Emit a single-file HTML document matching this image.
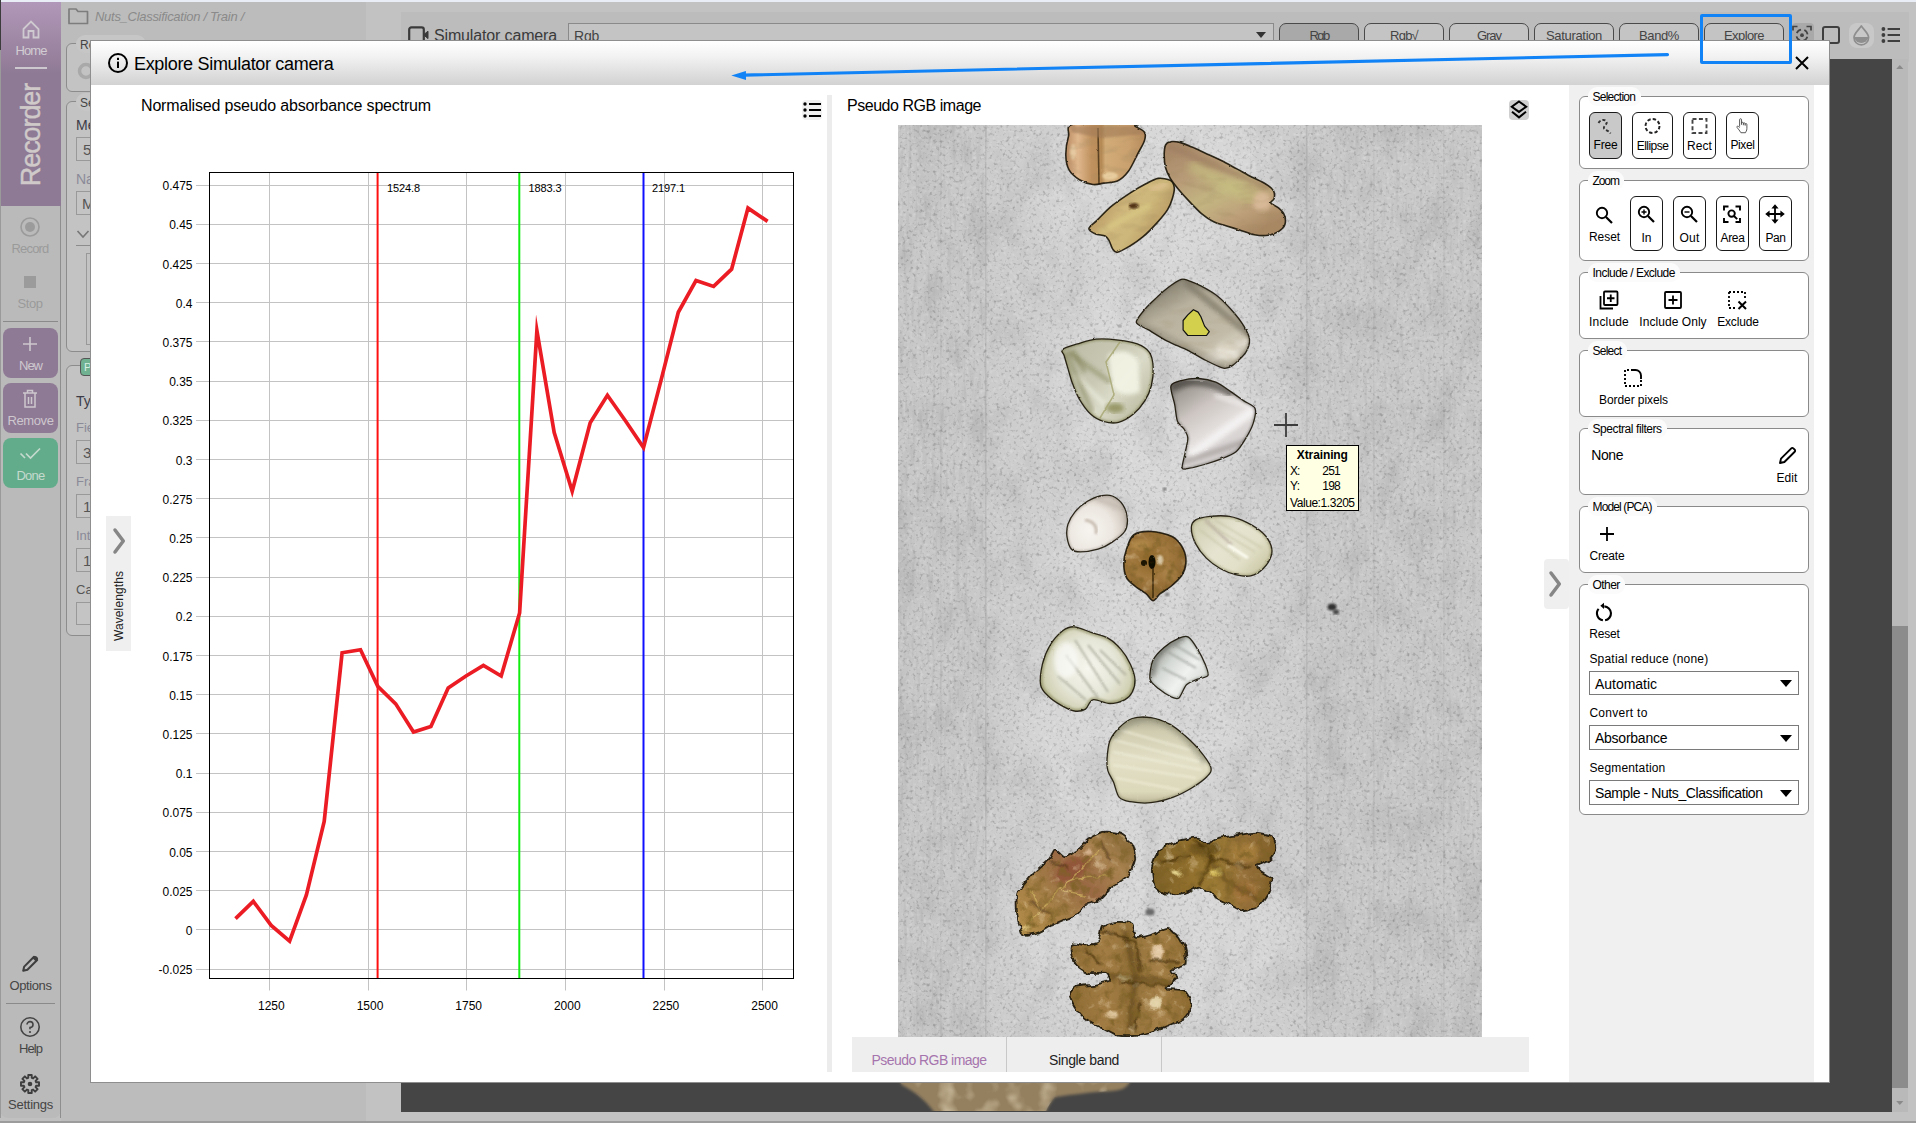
<!DOCTYPE html>
<html><head><meta charset="utf-8"><title>Explore Simulator camera</title>
<style>
html,body{margin:0;padding:0;}
body{width:1916px;height:1123px;overflow:hidden;position:relative;background:#c0c0c0;font-family:"Liberation Sans",sans-serif;}
.a{position:absolute;display:block;}
.t{white-space:nowrap;}
</style></head><body>
<div class="a" style="left:0px;top:0px;width:1916px;height:2px;background:#e9edf6;"></div>
<div class="a" style="left:61px;top:2px;width:305px;height:1120px;background:#bcbcbc;"></div>
<div class="a" style="left:366px;top:2px;width:1550px;height:1120px;background:#c2c2c2;"></div>
<div class="a" style="left:401px;top:12px;width:1508px;height:50px;background:#bcbcbc;"></div>
<div class="a" style="left:0px;top:2px;width:61px;height:1116px;background:#bababa;border-bottom-left-radius:8px;border-bottom-right-radius:8px;"></div>
<div class="a" style="left:1px;top:2px;width:60px;height:204px;background:#8f7a95;"></div>
<div class="a" style="left:1px;top:2px;width:60px;height:72px;background:linear-gradient(#b197b9,#8f7a95);"></div>
<div class="a" style="left:0px;top:0px;width:1px;height:50px;background:#3c3c3c;"></div>
<div class="a" style="left:0px;top:50px;width:1px;height:1068px;background:#9a9a9a;"></div>
<div class="a" style="left:60px;top:206px;width:1px;height:912px;background:#8e8e8e;"></div>
<div class="a" style="left:0px;top:1121px;width:1916px;height:2px;background:#9c9c9c;"></div>
<svg class="a" style="left:20px;top:19px;" width="22" height="20"><path d="M3.5 10 L11 2.5 L18.5 10 V18.5 H13.5 V12 H8.5 V18.5 H3.5 Z" fill="none" stroke="#cfcacf" stroke-width="1.8" stroke-linejoin="miter"/></svg>
<div class="a t" style="left:15.50px;top:42.00px;font-size:13px;line-height:17px;color:#d2cdd2;letter-spacing:-0.919px;">Home</div>
<div class="a" style="left:15px;top:67px;width:32px;height:2px;background:#cdc8cd;"></div>
<div class="a t" style="left:31px;top:134.5px;width:0;height:0;"><div class="a t" style="transform:translate(-50%,-50%) rotate(-90deg);font-size:27px;font-weight:normal;-webkit-text-stroke:0.45px #cfcac9;color:#cfcac9;letter-spacing:-1.1px;line-height:30px;">Recorder</div></div>
<svg class="a" style="left:19px;top:216px;" width="22" height="22"><circle cx="11" cy="11" r="9" fill="none" stroke="#9b9b9b" stroke-width="1.6"/><circle cx="11" cy="11" r="5" fill="#9b9b9b"/></svg>
<div class="a t" style="left:11.50px;top:239.50px;font-size:13px;line-height:17px;color:#9a9a9a;letter-spacing:-0.818px;">Record</div>
<div class="a" style="left:24px;top:276px;width:12px;height:12px;background:#9b9b9b;"></div>
<div class="a t" style="left:17.50px;top:295.00px;font-size:13px;line-height:17px;color:#9a9a9a;letter-spacing:-0.436px;">Stop</div>
<div class="a" style="left:3px;top:321px;width:55px;height:1.4px;background:#8a8a8a;"></div>
<div class="a" style="left:3px;top:328px;width:55px;height:50px;background:#8f7a95;border-radius:8px;"></div>
<svg class="a" style="left:20px;top:334px;" width="20" height="20"><path d="M10 3 V17 M3 10 H17" stroke="#cdc7ce" stroke-width="1.6" fill="none"/></svg>
<div class="a t" style="left:19.00px;top:356.50px;font-size:13px;line-height:17px;color:#cdc7ce;letter-spacing:-1.002px;">New</div>
<div class="a" style="left:3px;top:383px;width:55px;height:50px;background:#8f7a95;border-radius:8px;"></div>
<svg class="a" style="left:20px;top:388px;" width="20" height="22"><path d="M3 5 H17 M7.5 5 V2.5 H12.5 V5 M5 5 V19 H15 V5 M8.5 9 V16 M11.5 9 V16" stroke="#cdc7ce" stroke-width="1.5" fill="none"/></svg>
<div class="a t" style="left:7.50px;top:412.00px;font-size:13px;line-height:17px;color:#cdc7ce;letter-spacing:-0.401px;">Remove</div>
<div class="a" style="left:3px;top:438px;width:55px;height:50px;background:#63ac8b;border-radius:8px;"></div>
<svg class="a" style="left:18px;top:446px;" width="26" height="16"><path d="M2.5 7.5 L7 12 M8 7.5 L12.5 12 L22 2.5" stroke="#c4dace" stroke-width="1.7" fill="none"/></svg>
<div class="a t" style="left:16.50px;top:467.00px;font-size:13px;line-height:17px;color:#c4dace;letter-spacing:-0.769px;">Done</div>
<svg class="a" style="left:19px;top:953px;" width="22" height="22"><path d="M4.2 17.8 L5.2 13.6 L15 3.8 L18.2 7 L8.4 16.8 Z" stroke="#3e3e3e" stroke-width="2" fill="none" stroke-linejoin="round"/><path d="M13.6 5.2 L15.4 3.4 a1.6 1.6 0 0 1 2.2 0 L18.6 4.4 a1.6 1.6 0 0 1 0 2.2 L16.8 8.4 Z" fill="#3e3e3e"/></svg>
<div class="a t" style="left:9.50px;top:976.70px;font-size:13px;line-height:17px;color:#454545;letter-spacing:-0.400px;">Options</div>
<div class="a" style="left:6px;top:1003px;width:49px;height:1px;background:#8a8a8a;"></div>
<svg class="a" style="left:19px;top:1016px;" width="22" height="22"><circle cx="11" cy="11" r="9.2" fill="none" stroke="#444" stroke-width="1.6"/><path d="M8 8.6 A3 3 0 1 1 11 11.6 V13.2" fill="none" stroke="#444" stroke-width="1.6"/><circle cx="11" cy="16" r="1.1" fill="#444"/></svg>
<div class="a t" style="left:19.00px;top:1039.80px;font-size:13px;line-height:17px;color:#454545;letter-spacing:-0.934px;">Help</div>
<svg class="a" style="left:19px;top:1073px;" width="22" height="22"><g transform="translate(11,11)" stroke="#3e3e3e" fill="none" stroke-width="1.9"><circle r="2.3" fill="#3e3e3e" stroke="none"/><polygon points="9.03,-1.74 9.03,1.74 6.17,1.71 5.57,3.15 7.62,5.16 5.16,7.62 3.15,5.57 1.71,6.17 1.74,9.03 -1.74,9.03 -1.71,6.17 -3.15,5.57 -5.16,7.62 -7.62,5.16 -5.57,3.15 -6.17,1.71 -9.03,1.74 -9.03,-1.74 -6.17,-1.71 -5.57,-3.15 -7.62,-5.16 -5.16,-7.62 -3.15,-5.57 -1.71,-6.17 -1.74,-9.03 1.74,-9.03 1.71,-6.17 3.15,-5.57 5.16,-7.62 7.62,-5.16 5.57,-3.15 6.17,-1.71" stroke-linejoin="round"/></g></svg>
<div class="a t" style="left:8.00px;top:1096.00px;font-size:13px;line-height:17px;color:#454545;letter-spacing:-0.246px;">Settings</div>
<svg class="a" style="left:67px;top:6px;" width="24" height="20"><path d="M2 3 H9 L11 5.5 H20.5 V17.5 H2 Z" fill="none" stroke="#7d7d7d" stroke-width="1.7" stroke-linejoin="round"/></svg>
<div class="a t" style="left:95.00px;top:8.00px;font-size:13px;line-height:17px;color:#8a8a8a;letter-spacing:-0.285px;font-style:italic;">Nuts_Classification / Train /</div>
<div class="a" style="left:66px;top:43px;width:300px;height:49px;background:#c3c3c3;border:1px solid #8c8c8c;box-sizing:border-box;border-radius:6px;"></div>
<div class="a" style="left:76px;top:35px;width:70px;height:18px;background:#c6c6c6;border-radius:9px;"></div>
<div class="a t" style="left:80.00px;top:37.00px;font-size:12px;line-height:16px;color:#444;">Recorder</div>
<svg class="a" style="left:76px;top:61px;" width="20" height="20"><circle cx="10" cy="10" r="6.5" fill="none" stroke="#a9a9a9" stroke-width="3.5"/></svg>
<div class="a" style="left:66px;top:101px;width:300px;height:251px;background:#c3c3c3;border:1px solid #8c8c8c;box-sizing:border-box;border-radius:6px;"></div>
<div class="a" style="left:76px;top:93px;width:70px;height:18px;background:#c6c6c6;border-radius:9px;"></div>
<div class="a t" style="left:80.00px;top:94.50px;font-size:12px;line-height:16px;color:#444;">Settings</div>
<div class="a t" style="left:76.00px;top:115.50px;font-size:14px;line-height:18px;color:#3c3c48;">Measurement</div>
<div class="a" style="left:76px;top:137px;width:200px;height:24px;background:#c4c4c4;border:1px solid #999;box-sizing:border-box;"></div>
<div class="a t" style="left:83.00px;top:140.00px;font-size:15px;line-height:19px;color:#555;">5</div>
<div class="a t" style="left:76.00px;top:169.50px;font-size:14px;line-height:18px;color:#8a8a98;">Name</div>
<div class="a" style="left:76px;top:191px;width:200px;height:24px;background:#c4c4c4;border:1px solid #999;box-sizing:border-box;"></div>
<div class="a t" style="left:82.00px;top:194.00px;font-size:15px;line-height:19px;color:#555;">M</div>
<svg class="a" style="left:76px;top:228px;" width="14" height="12"><path d="M1.5 3 L7 9 L12.5 3" fill="none" stroke="#777" stroke-width="1.6"/></svg>
<div class="a" style="left:76px;top:245px;width:200px;height:1px;background:#8c8c8c;"></div>
<div class="a" style="left:86px;top:253px;width:200px;height:92px;border:1px solid #999;box-sizing:border-box;"></div>
<div class="a" style="left:66px;top:365px;width:300px;height:271px;background:#c3c3c3;border:1px solid #8c8c8c;box-sizing:border-box;border-radius:6px;"></div>
<div class="a" style="left:80px;top:358px;width:40px;height:18px;background:#6fb190;border:1px solid #555;box-sizing:border-box;border-radius:4px;"></div>
<div class="a t" style="left:84.00px;top:360.00px;font-size:11px;line-height:15px;color:#d8efe4;">P</div>
<div class="a t" style="left:76.00px;top:391.50px;font-size:14px;line-height:18px;color:#3c3c48;">Type</div>
<div class="a t" style="left:76.00px;top:418.50px;font-size:13px;line-height:17px;color:#8a8a98;">Field</div>
<div class="a" style="left:76px;top:440px;width:200px;height:24px;background:#c4c4c4;border:1px solid #999;box-sizing:border-box;"></div>
<div class="a t" style="left:83.00px;top:443.00px;font-size:15px;line-height:19px;color:#555;">3</div>
<div class="a t" style="left:76.00px;top:472.50px;font-size:13px;line-height:17px;color:#8a8a98;">Frames</div>
<div class="a" style="left:76px;top:494px;width:200px;height:24px;background:#c4c4c4;border:1px solid #999;box-sizing:border-box;"></div>
<div class="a t" style="left:83.00px;top:497.00px;font-size:15px;line-height:19px;color:#555;">1</div>
<div class="a t" style="left:76.00px;top:526.50px;font-size:13px;line-height:17px;color:#8a8a98;">Integration</div>
<div class="a" style="left:76px;top:548px;width:200px;height:24px;background:#c4c4c4;border:1px solid #999;box-sizing:border-box;"></div>
<div class="a t" style="left:83.00px;top:551.00px;font-size:15px;line-height:19px;color:#555;">1</div>
<div class="a t" style="left:76.00px;top:581.00px;font-size:13px;line-height:17px;color:#555;">Calibration</div>
<div class="a" style="left:76px;top:602px;width:200px;height:23px;background:#c4c4c4;border:1px solid #999;box-sizing:border-box;"></div>
<svg class="a" style="left:407px;top:25px;" width="24" height="18"><rect x="2.2" y="2.4" width="14.6" height="15" rx="2.2" fill="none" stroke="#3a3a3a" stroke-width="2.2"/><path d="M16.5 9.8 L21 6.2 V13.6 Z" fill="#3a3a3a" stroke="#3a3a3a" stroke-width="1"/></svg>
<div class="a t" style="left:434.00px;top:26.00px;font-size:16px;line-height:20px;color:#3a3a3a;letter-spacing:-0.148px;">Simulator camera</div>
<div class="a" style="left:568px;top:23px;width:706px;height:26px;background:#c4c4c4;border:1px solid #8a8a8a;box-sizing:border-box;"></div>
<div class="a t" style="left:574.00px;top:26.60px;font-size:14px;line-height:18px;color:#444;letter-spacing:-0.228px;">Rgb</div>
<svg class="a" style="left:1255px;top:31px;" width="12" height="8"><path d="M1 1 H11 L6 7 Z" fill="#333"/></svg>
<div class="a" style="left:1279px;top:23px;width:80px;height:30px;background:#a9a9a9;border:1px solid #4a4a4a;box-sizing:border-box;border-radius:7px;"></div>
<div class="a t" style="left:1309.50px;top:26.50px;font-size:13px;line-height:17px;color:#444;letter-spacing:-1.616px;">Rgb</div>
<div class="a" style="left:1364px;top:23px;width:80px;height:30px;background:#c4c4c4;border:1px solid #4a4a4a;box-sizing:border-box;border-radius:7px;"></div>
<div class="a t" style="left:1390.00px;top:26.50px;font-size:13px;line-height:17px;color:#444;letter-spacing:-0.745px;">Rgb√</div>
<div class="a" style="left:1449px;top:23px;width:80px;height:30px;background:#c4c4c4;border:1px solid #4a4a4a;box-sizing:border-box;border-radius:7px;"></div>
<div class="a t" style="left:1477.00px;top:26.50px;font-size:13px;line-height:17px;color:#444;letter-spacing:-1.043px;">Gray</div>
<div class="a" style="left:1534px;top:23px;width:80px;height:30px;background:#c4c4c4;border:1px solid #4a4a4a;box-sizing:border-box;border-radius:7px;"></div>
<div class="a t" style="left:1546.00px;top:26.50px;font-size:13px;line-height:17px;color:#444;letter-spacing:-0.326px;">Saturation</div>
<div class="a" style="left:1619px;top:23px;width:80px;height:30px;background:#c4c4c4;border:1px solid #4a4a4a;box-sizing:border-box;border-radius:7px;"></div>
<div class="a t" style="left:1639.00px;top:26.50px;font-size:13px;line-height:17px;color:#444;letter-spacing:-0.384px;">Band%</div>
<div class="a" style="left:1704px;top:23px;width:80px;height:30px;background:#c4c4c4;border:1px solid #4a4a4a;box-sizing:border-box;border-radius:7px;"></div>
<div class="a t" style="left:1724.00px;top:26.50px;font-size:13px;line-height:17px;color:#444;letter-spacing:-0.582px;">Explore</div>
<div class="a" style="left:1792px;top:23px;width:22px;height:26px;background:#a9a9a9;border-radius:4px;"></div>
<svg class="a" style="left:1791px;top:23px;" width="22" height="26"><g fill="none" stroke="#444" stroke-width="1.7"><path d="M2 7.5 V3.5 H6.5 M15.5 3.5 H20 V7.5 M2 17 V21 H6.5 M15.5 21 H20 V17"/><circle cx="11" cy="12.2" r="5.6" stroke-dasharray="5.4 3.4" stroke-dashoffset="-1.7"/></g><circle cx="11" cy="12.2" r="1.9" fill="#444"/></svg>
<div class="a" style="left:1822px;top:26px;width:18px;height:18px;border:2px solid #3f3f3f;box-sizing:border-box;border-radius:3px;"></div>
<div class="a" style="left:1849px;top:23px;width:25px;height:25px;background:#c8c8c8;border-radius:8px;"></div>
<svg class="a" style="left:1850px;top:23px;" width="24" height="24"><path d="M11.3 3 C 14 7, 18.6 10.5, 18.6 14.6 A7.3 7.3 0 0 1 4 14.6 C 4 10.5, 8.6 7, 11.3 3 Z" fill="none" stroke="#8e8e8e" stroke-width="1.7" stroke-linejoin="round"/><path d="M4.1 14 H18.5 A7.3 7.3 0 0 1 4.1 14 Z" fill="#8e8e8e"/></svg>
<svg class="a" style="left:1880px;top:26px;" width="22" height="18"><g fill="#3f3f3f"><circle cx="3.4" cy="3" r="1.9"/><circle cx="3.4" cy="9" r="1.9"/><circle cx="3.4" cy="15" r="1.9"/></g><path d="M7.6 3 H20 M7.6 9 H20 M7.6 15 H20" stroke="#3f3f3f" stroke-width="2"/></svg>
<div class="a" style="left:401px;top:59px;width:1491px;height:1053px;background:#454545;"></div>
<div class="a" style="left:1892px;top:59px;width:16px;height:1053px;background:#b9b9b9;"></div>
<div class="a" style="left:1892px;top:626px;width:16px;height:462px;background:#8c8c8c;"></div>
<svg class="a" style="left:1894px;top:63px;" width="12" height="8"><path d="M2.2 6 L5.8 2 L9.4 6 Z" fill="#8a8a8a"/></svg>
<svg class="a" style="left:1894px;top:1099px;" width="12" height="8"><path d="M2.2 2 L5.8 6 L9.4 2 Z" fill="#8a8a8a"/></svg>
<svg class="a" style="left:890px;top:1083px;" width="260" height="28"><defs><filter id="bl" x="-20%" y="-50%" width="140%" height="200%"><feGaussianBlur stdDeviation="1.8"/></filter><filter id="blt" x="0" y="0" width="100%" height="100%"><feTurbulence type="fractalNoise" baseFrequency="0.06" numOctaves="2" seed="4"/><feColorMatrix type="matrix" values="0 0 0 0 0.74  0 0 0 0 0.64  0 0 0 0 0.46  2.8 0 0 0 -1.3"/></filter><clipPath id="blc"><path d="M9 -4 H241 C 238 5, 232 7, 222 8 C 200 9, 180 12, 165 14 C 160 20, 156 26, 155 32 H46 C 40 22, 28 10, 12 2 Z"/></clipPath></defs><path d="M9 -4 H241 C 238 5, 232 7, 222 8 C 200 9, 180 12, 165 14 C 160 20, 156 26, 155 32 H46 C 40 22, 28 10, 12 2 Z" fill="#94805f" filter="url(#bl)"/><g clip-path="url(#blc)"><rect x="0" y="0" width="260" height="28" filter="url(#blt)" opacity="0.6"/></g></svg>
<div class="a" style="left:90px;top:40px;width:1740px;height:1043px;background:#ffffff;border:1px solid #8e8e8e;box-sizing:border-box;"></div>
<div class="a" style="left:91px;top:41px;width:1738px;height:44px;background:linear-gradient(#ffffff 0%,#f2f2f2 35%,#d2d2d2 100%);"></div>
<svg class="a" style="left:106px;top:51px;" width="24" height="24"><circle cx="12" cy="12" r="9" fill="none" stroke="#000" stroke-width="2"/><rect x="11" y="10.6" width="2" height="6.4" fill="#000"/><rect x="11" y="6.8" width="2" height="2.2" fill="#000"/></svg>
<div class="a t" style="left:134.00px;top:52.50px;font-size:18px;line-height:22px;color:#000;letter-spacing:-0.316px;">Explore Simulator camera</div>
<svg class="a" style="left:1794px;top:55px;" width="16" height="16"><path d="M2 2 L14 14 M14 2 L2 14" stroke="#000" stroke-width="2" fill="none"/></svg>
<div class="a t" style="left:141.00px;top:95.70px;font-size:16px;line-height:20px;color:#000;letter-spacing:-0.166px;">Normalised pseudo absorbance spectrum</div>
<div class="a" style="left:802px;top:100px;width:20px;height:20px;background:#f0f0f0;border-radius:4px;"></div>
<svg class="a" style="left:802px;top:101px;" width="20" height="18"><g fill="#000"><circle cx="3" cy="3" r="1.7"/><circle cx="3" cy="9" r="1.7"/><circle cx="3" cy="15" r="1.7"/></g><path d="M7 3 H19 M7 9 H19 M7 15 H19" stroke="#000" stroke-width="2"/></svg>
<div class="a" style="left:106px;top:516px;width:25px;height:135px;background:#efefef;"></div>
<svg class="a" style="left:111px;top:527px;" width="16" height="28"><path d="M4 3 L12.3 14 L4 25" fill="none" stroke="#868686" stroke-width="3.5" stroke-linecap="round" stroke-linejoin="round"/></svg>
<div class="a t" style="left:119px;top:605.5px;width:0;height:0;"><div class="a t" style="transform:translate(-50%,-50%) rotate(-90deg);font-size:12px;color:#222;letter-spacing:0.1px;line-height:14px;">Wavelengths</div></div>
<svg class="a" style="left:0px;top:0px;left:0;top:0;" width="840" height="1000"><rect x="209.5" y="172.5" width="584.0" height="806.0" fill="#fff" stroke="none"/><path d="M196 969.5 H793.5" stroke="#c3c3c3" stroke-width="1"/><path d="M196 929.5 H793.5" stroke="#c3c3c3" stroke-width="1"/><path d="M196 890.5 H793.5" stroke="#c3c3c3" stroke-width="1"/><path d="M196 851.5 H793.5" stroke="#c3c3c3" stroke-width="1"/><path d="M196 812.5 H793.5" stroke="#c3c3c3" stroke-width="1"/><path d="M196 773.5 H793.5" stroke="#c3c3c3" stroke-width="1"/><path d="M196 733.5 H793.5" stroke="#c3c3c3" stroke-width="1"/><path d="M196 694.5 H793.5" stroke="#c3c3c3" stroke-width="1"/><path d="M196 655.5 H793.5" stroke="#c3c3c3" stroke-width="1"/><path d="M196 616.5 H793.5" stroke="#c3c3c3" stroke-width="1"/><path d="M196 577.5 H793.5" stroke="#c3c3c3" stroke-width="1"/><path d="M196 537.5 H793.5" stroke="#c3c3c3" stroke-width="1"/><path d="M196 498.5 H793.5" stroke="#c3c3c3" stroke-width="1"/><path d="M196 459.5 H793.5" stroke="#c3c3c3" stroke-width="1"/><path d="M196 420.5 H793.5" stroke="#c3c3c3" stroke-width="1"/><path d="M196 381.5 H793.5" stroke="#c3c3c3" stroke-width="1"/><path d="M196 341.5 H793.5" stroke="#c3c3c3" stroke-width="1"/><path d="M196 302.5 H793.5" stroke="#c3c3c3" stroke-width="1"/><path d="M196 263.5 H793.5" stroke="#c3c3c3" stroke-width="1"/><path d="M196 224.5 H793.5" stroke="#c3c3c3" stroke-width="1"/><path d="M196 185.5 H793.5" stroke="#c3c3c3" stroke-width="1"/><path d="M269.5 172.5 V990.5" stroke="#c3c3c3" stroke-width="1"/><path d="M368.5 172.5 V990.5" stroke="#c3c3c3" stroke-width="1"/><path d="M466.5 172.5 V990.5" stroke="#c3c3c3" stroke-width="1"/><path d="M565.5 172.5 V990.5" stroke="#c3c3c3" stroke-width="1"/><path d="M664.5 172.5 V990.5" stroke="#c3c3c3" stroke-width="1"/><path d="M762.5 172.5 V990.5" stroke="#c3c3c3" stroke-width="1"/><path d="M377.6 172.5 V978.5" stroke="#ff1010" stroke-width="2"/><path d="M519.3 172.5 V978.5" stroke="#10ee10" stroke-width="2"/><path d="M643.5 172.5 V978.5" stroke="#1010ff" stroke-width="2"/><polyline fill="none" stroke="#ec1c24" stroke-width="3.7" stroke-linejoin="miter" stroke-miterlimit="12" points="235.5,918.6 253.3,901.3 271.2,925.4 289.6,941.2 306.4,895 324.2,821.4 342.1,652.8 360.5,649.7 377.8,686.4 395.7,703.8 413.5,732.1 430.9,726.4 448.2,688 466,676 483.4,665.4 501.2,676 519.6,612.9 536.9,330.6 554.2,432.5 572.2,491.3 590.2,422.7 607.4,395.3 625.4,420.8 643.5,447.5 660.7,381.6 678.3,312.3 696,280.5 713.6,286.4 731.6,269.2 748,208.1 767.6,221.4"/><rect x="209.5" y="172.5" width="584.0" height="806.0" fill="none" stroke="#000" stroke-width="1"/></svg>
<div class="a t" style="left:158.47px;top:962.20px;font-size:12px;line-height:16px;color:#000;">-0.025</div>
<div class="a t" style="left:185.83px;top:923.00px;font-size:12px;line-height:16px;color:#000;">0</div>
<div class="a t" style="left:162.47px;top:883.80px;font-size:12px;line-height:16px;color:#000;">0.025</div>
<div class="a t" style="left:169.15px;top:844.60px;font-size:12px;line-height:16px;color:#000;">0.05</div>
<div class="a t" style="left:162.47px;top:805.40px;font-size:12px;line-height:16px;color:#000;">0.075</div>
<div class="a t" style="left:175.82px;top:766.20px;font-size:12px;line-height:16px;color:#000;">0.1</div>
<div class="a t" style="left:162.47px;top:727.00px;font-size:12px;line-height:16px;color:#000;">0.125</div>
<div class="a t" style="left:169.15px;top:687.80px;font-size:12px;line-height:16px;color:#000;">0.15</div>
<div class="a t" style="left:162.47px;top:648.60px;font-size:12px;line-height:16px;color:#000;">0.175</div>
<div class="a t" style="left:175.82px;top:609.40px;font-size:12px;line-height:16px;color:#000;">0.2</div>
<div class="a t" style="left:162.47px;top:570.20px;font-size:12px;line-height:16px;color:#000;">0.225</div>
<div class="a t" style="left:169.15px;top:531.00px;font-size:12px;line-height:16px;color:#000;">0.25</div>
<div class="a t" style="left:162.47px;top:491.80px;font-size:12px;line-height:16px;color:#000;">0.275</div>
<div class="a t" style="left:175.82px;top:452.60px;font-size:12px;line-height:16px;color:#000;">0.3</div>
<div class="a t" style="left:162.47px;top:413.40px;font-size:12px;line-height:16px;color:#000;">0.325</div>
<div class="a t" style="left:169.15px;top:374.20px;font-size:12px;line-height:16px;color:#000;">0.35</div>
<div class="a t" style="left:162.47px;top:335.00px;font-size:12px;line-height:16px;color:#000;">0.375</div>
<div class="a t" style="left:175.82px;top:295.80px;font-size:12px;line-height:16px;color:#000;">0.4</div>
<div class="a t" style="left:162.47px;top:256.60px;font-size:12px;line-height:16px;color:#000;">0.425</div>
<div class="a t" style="left:169.15px;top:217.40px;font-size:12px;line-height:16px;color:#000;">0.45</div>
<div class="a t" style="left:162.47px;top:178.20px;font-size:12px;line-height:16px;color:#000;">0.475</div>
<div class="a t" style="left:258.01px;top:998.00px;font-size:12px;line-height:16px;color:#000;">1250</div>
<div class="a t" style="left:356.65px;top:998.00px;font-size:12px;line-height:16px;color:#000;">1500</div>
<div class="a t" style="left:455.29px;top:998.00px;font-size:12px;line-height:16px;color:#000;">1750</div>
<div class="a t" style="left:553.93px;top:998.00px;font-size:12px;line-height:16px;color:#000;">2000</div>
<div class="a t" style="left:652.57px;top:998.00px;font-size:12px;line-height:16px;color:#000;">2250</div>
<div class="a t" style="left:751.21px;top:998.00px;font-size:12px;line-height:16px;color:#000;">2500</div>
<div class="a t" style="left:387.00px;top:181.00px;font-size:11px;line-height:15px;color:#000;letter-spacing:-0.107px;">1524.8</div>
<div class="a t" style="left:528.50px;top:181.00px;font-size:11px;line-height:15px;color:#000;letter-spacing:-0.107px;">1883.3</div>
<div class="a t" style="left:652.00px;top:181.00px;font-size:11px;line-height:15px;color:#000;letter-spacing:-0.107px;">2197.1</div>
<div class="a" style="left:827px;top:95px;width:5px;height:977px;background:#ececec;"></div>
<div class="a t" style="left:847.00px;top:95.70px;font-size:16px;line-height:20px;color:#000;letter-spacing:-0.463px;">Pseudo RGB image</div>
<div class="a" style="left:1509px;top:100px;width:20px;height:20px;background:#d0d0d0;border-radius:4px;"></div>
<svg class="a" style="left:1509px;top:99px;" width="20" height="22"><path d="M10 2.5 L17.2 7.7 L10 12.9 L2.8 7.7 Z" fill="none" stroke="#000" stroke-width="2" stroke-linejoin="miter"/><path d="M3 12.7 L10 18.4 L17 12.7" fill="none" stroke="#000" stroke-width="2"/></svg>
<div class="a" style="left:852px;top:1037px;width:677px;height:35px;background:#eeeeee;"></div>
<div class="a" style="left:1006px;top:1037px;width:1px;height:35px;background:#c8c8c8;"></div>
<div class="a" style="left:1161px;top:1037px;width:1px;height:35px;background:#c8c8c8;"></div>
<div class="a t" style="left:871.50px;top:1051.00px;font-size:14px;line-height:18px;color:#a674ad;letter-spacing:-0.546px;">Pseudo RGB image</div>
<div class="a t" style="left:1049.00px;top:1051.00px;font-size:14px;line-height:18px;color:#222;letter-spacing:-0.359px;">Single band</div>
<div class="a" style="left:1544px;top:559px;width:25px;height:49.5px;background:#efefef;border-radius:4px;"></div>
<svg class="a" style="left:1547px;top:570px;" width="16" height="28"><path d="M4 3 L12.3 14 L4 25" fill="none" stroke="#868686" stroke-width="3.5" stroke-linecap="round" stroke-linejoin="round"/></svg>
<div class="a" style="left:1569px;top:85px;width:245px;height:997px;background:#f0f0f0;"></div>
<div class="a" style="left:1579px;top:96px;width:230px;height:73px;background:#fff;border:1px solid #8a8a8a;box-sizing:border-box;border-radius:6px;"></div>
<div class="a" style="left:1588px;top:87px;width:52.7px;height:19px;background:#fbfbfb;border-radius:9px;"></div>
<div class="a t" style="left:1592.50px;top:89.00px;font-size:12px;line-height:16px;color:#000;letter-spacing:-0.740px;">Selection</div>
<div class="a" style="left:1589px;top:112px;width:33px;height:47px;background:#c9c9c9;border:1px solid #1a1a1a;box-sizing:border-box;border-radius:6px;"></div>
<div class="a" style="left:1632px;top:112px;width:41px;height:47px;background:#fff;border:1px solid #1a1a1a;box-sizing:border-box;border-radius:6px;"></div>
<div class="a" style="left:1683px;top:112px;width:33px;height:47px;background:#fff;border:1px solid #1a1a1a;box-sizing:border-box;border-radius:6px;"></div>
<div class="a" style="left:1726px;top:112px;width:33px;height:47px;background:#fff;border:1px solid #1a1a1a;box-sizing:border-box;border-radius:6px;"></div>
<div class="a t" style="left:1593.50px;top:137.00px;font-size:12px;line-height:16px;color:#000;letter-spacing:-0.168px;">Free</div>
<div class="a t" style="left:1636.75px;top:137.50px;font-size:12px;line-height:16px;color:#000;letter-spacing:-0.550px;">Ellipse</div>
<div class="a t" style="left:1687.00px;top:137.50px;font-size:12px;line-height:16px;color:#000;letter-spacing:0.082px;">Rect</div>
<div class="a t" style="left:1730.50px;top:137.00px;font-size:12px;line-height:16px;color:#000;letter-spacing:-0.402px;">Pixel</div>
<svg class="a" style="left:1593.5px;top:116px;" width="22" height="20"><path d="M4.5 7 C6.5 3.5, 11 3, 12.5 5.5 C14 8, 9 10, 10 12.5 C10.8 14.3, 14 14, 16.5 17.5" fill="none" stroke="#333" stroke-width="1.9" stroke-dasharray="3 2"/></svg>
<svg class="a" style="left:1642px;top:116px;" width="22" height="20"><circle cx="10.5" cy="10" r="7" fill="none" stroke="#222" stroke-width="1.9" stroke-dasharray="3.4 2.1"/></svg>
<svg class="a" style="left:1688.5px;top:116px;" width="22" height="20"><rect x="3.5" y="3" width="14" height="14" fill="none" stroke="#444" stroke-width="1.9" stroke-dasharray="4 2.4"/></svg>
<svg class="a" style="left:1733px;top:116px;" width="20" height="22"><path transform="scale(0.88)" d="M7.5 12 V4.2 a1.1 1.1 0 0 1 2.2 0 V10 M9.7 8.2 a1.05 1.05 0 0 1 2.1 0 V10.5 M11.8 8.8 a1 1 0 0 1 2 0 V11 M13.8 9.6 a1 1 0 0 1 2 0 V14 c0 3 -1.2 3.5 -1.6 5 H9 C8 17 5.8 14.6 4.6 13 c-.7 -1 .5 -2 1.5 -1.2 L7.5 13.2" fill="none" stroke="#444" stroke-width="1"/></svg>
<div class="a" style="left:1579px;top:180px;width:230px;height:81px;background:#fff;border:1px solid #8a8a8a;box-sizing:border-box;border-radius:6px;"></div>
<div class="a" style="left:1588px;top:171px;width:36.3px;height:19px;background:#fbfbfb;border-radius:9px;"></div>
<div class="a t" style="left:1592.50px;top:173.00px;font-size:12px;line-height:16px;color:#000;letter-spacing:-1.093px;">Zoom</div>
<div class="a" style="left:1630px;top:196px;width:33px;height:55px;background:#fff;border:1px solid #1a1a1a;box-sizing:border-box;border-radius:6px;"></div>
<div class="a" style="left:1673px;top:196px;width:33px;height:55px;background:#fff;border:1px solid #1a1a1a;box-sizing:border-box;border-radius:6px;"></div>
<div class="a" style="left:1716px;top:196px;width:33px;height:55px;background:#fff;border:1px solid #1a1a1a;box-sizing:border-box;border-radius:6px;"></div>
<div class="a" style="left:1759px;top:196px;width:33px;height:55px;background:#fff;border:1px solid #1a1a1a;box-sizing:border-box;border-radius:6px;"></div>
<div class="a t" style="left:1589.00px;top:228.50px;font-size:12px;line-height:16px;color:#000;letter-spacing:-0.069px;">Reset</div>
<div class="a t" style="left:1641.50px;top:229.50px;font-size:12px;line-height:16px;color:#000;">In</div>
<div class="a t" style="left:1679.50px;top:229.50px;font-size:12px;line-height:16px;color:#000;letter-spacing:0.219px;">Out</div>
<div class="a t" style="left:1720.50px;top:229.50px;font-size:12px;line-height:16px;color:#000;letter-spacing:-0.337px;">Area</div>
<div class="a t" style="left:1765.50px;top:229.50px;font-size:12px;line-height:16px;color:#000;letter-spacing:-0.451px;">Pan</div>
<svg class="a" style="left:1594px;top:205px;" width="22" height="22"><circle cx="8" cy="8" r="5.2" fill="none" stroke="#000" stroke-width="1.9"/><path d="M12 12 L18 18" stroke="#000" stroke-width="2.2"/></svg>
<svg class="a" style="left:1636px;top:204px;" width="22" height="22"><circle cx="8" cy="8" r="5.2" fill="none" stroke="#000" stroke-width="1.9"/><path d="M12 12 L18 18" stroke="#000" stroke-width="2.2"/><path d="M5.5 8 H10.5 M8 5.5 V10.5" stroke="#000" stroke-width="1.4"/></svg>
<svg class="a" style="left:1679px;top:204px;" width="22" height="22"><circle cx="8" cy="8" r="5.2" fill="none" stroke="#000" stroke-width="1.9"/><path d="M12 12 L18 18" stroke="#000" stroke-width="2.2"/><path d="M5.5 8 H10.5" stroke="#000" stroke-width="1.4"/></svg>
<svg class="a" style="left:1721px;top:202px;" width="24" height="24"><g fill="none" stroke="#000" stroke-width="1.9"><path d="M3 8.5 V4.5 H7.5 M14.5 4.5 H19 V8.5 M3 16 V20 H7.5 M14.5 20 H19 V16"/><circle cx="10.6" cy="11.6" r="3.2"/><path d="M13 14 L16.2 17.2"/></g></svg>
<svg class="a" style="left:1763px;top:202px;" width="24" height="24"><g fill="none" stroke="#000" stroke-width="1.8"><path d="M12 5 V19 M5 12 H19"/></g><path d="M12 2.2 L15.6 6.6 H8.4 Z M12 21.8 L15.6 17.4 H8.4 Z M2.2 12 L6.6 8.4 V15.6 Z M21.8 12 L17.4 8.4 V15.6 Z" fill="#000"/></svg>
<div class="a" style="left:1579px;top:272px;width:230px;height:67px;background:#fff;border:1px solid #8a8a8a;box-sizing:border-box;border-radius:6px;"></div>
<div class="a" style="left:1588px;top:263px;width:92.4px;height:19px;background:#fbfbfb;border-radius:9px;"></div>
<div class="a t" style="left:1592.50px;top:265.00px;font-size:12px;line-height:16px;color:#000;letter-spacing:-0.529px;">Include / Exclude</div>
<div class="a t" style="left:1589.10px;top:313.50px;font-size:12px;line-height:16px;color:#000;letter-spacing:0.158px;">Include</div>
<div class="a t" style="left:1639.35px;top:313.50px;font-size:12px;line-height:16px;color:#000;letter-spacing:0.050px;">Include Only</div>
<div class="a t" style="left:1717.15px;top:313.50px;font-size:12px;line-height:16px;color:#000;letter-spacing:-0.142px;">Exclude</div>
<svg class="a" style="left:1598px;top:289px;" width="22" height="22"><g fill="none" stroke="#000" stroke-width="1.8"><rect x="6" y="2.5" width="13.5" height="13.5" rx="1"/><path d="M2.5 7 V19.5 H15"/><path d="M12.75 5.5 V13 M9 9.25 H16.5"/></g></svg>
<svg class="a" style="left:1662px;top:289px;" width="22" height="22"><g fill="none" stroke="#000" stroke-width="1.8"><rect x="3" y="3" width="16" height="16" rx="1"/><path d="M11 6.5 V15.5 M6.5 11 H15.5"/></g></svg>
<svg class="a" style="left:1726px;top:289px;" width="24" height="22"><g fill="none" stroke="#000"><path d="M3 3 H19 V11 M3 3 V19 H11" stroke-width="1.8" stroke-dasharray="2 2"/><path d="M12.5 12.5 L20 20 M20 12.5 L12.5 20" stroke-width="2"/></g></svg>
<div class="a" style="left:1579px;top:350px;width:230px;height:67px;background:#fff;border:1px solid #8a8a8a;box-sizing:border-box;border-radius:6px;"></div>
<div class="a" style="left:1588px;top:341px;width:38.8px;height:19px;background:#fbfbfb;border-radius:9px;"></div>
<div class="a t" style="left:1592.50px;top:343.00px;font-size:12px;line-height:16px;color:#000;letter-spacing:-0.759px;">Select</div>
<div class="a t" style="left:1599.00px;top:391.50px;font-size:12px;line-height:16px;color:#000;letter-spacing:-0.079px;">Border pixels</div>
<svg class="a" style="left:1622px;top:367px;" width="22" height="22"><g fill="none" stroke="#000"><path d="M11 3 H3 V19 H19 V11" stroke-width="1.9" stroke-dasharray="2 2"/><path d="M11 3 H13.5 A5.5 5.5 0 0 1 19 8.5 V12" stroke-width="1.9"/></g></svg>
<div class="a" style="left:1579px;top:428px;width:230px;height:67px;background:#fff;border:1px solid #8a8a8a;box-sizing:border-box;border-radius:6px;"></div>
<div class="a" style="left:1588px;top:419px;width:79.2px;height:19px;background:#fbfbfb;border-radius:9px;"></div>
<div class="a t" style="left:1592.50px;top:421.00px;font-size:12px;line-height:16px;color:#000;letter-spacing:-0.427px;">Spectral filters</div>
<div class="a t" style="left:1591.30px;top:446.00px;font-size:14px;line-height:18px;color:#000;letter-spacing:-0.442px;">None</div>
<svg class="a" style="left:1776px;top:445px;" width="22" height="22"><path d="M4 18 L5 13.6 L15.3 3.3 a1.4 1.4 0 0 1 2 0 L18.7 4.7 a1.4 1.4 0 0 1 0 2 L8.4 17 Z" stroke="#000" stroke-width="1.9" fill="none" stroke-linejoin="round"/></svg>
<div class="a t" style="left:1776.50px;top:470.00px;font-size:12px;line-height:16px;color:#000;letter-spacing:0.080px;">Edit</div>
<div class="a" style="left:1579px;top:506px;width:230px;height:67px;background:#fff;border:1px solid #8a8a8a;box-sizing:border-box;border-radius:6px;"></div>
<div class="a" style="left:1588px;top:497px;width:69.1px;height:19px;background:#fbfbfb;border-radius:9px;"></div>
<div class="a t" style="left:1592.50px;top:499.00px;font-size:12px;line-height:16px;color:#000;letter-spacing:-0.871px;">Model (PCA)</div>
<svg class="a" style="left:1597px;top:524px;" width="20" height="20"><path d="M10 3 V17 M3 10 H17" stroke="#000" stroke-width="1.8"/></svg>
<div class="a t" style="left:1589.45px;top:548.00px;font-size:12px;line-height:16px;color:#000;letter-spacing:-0.153px;">Create</div>
<div class="a" style="left:1579px;top:584px;width:230px;height:231px;background:#fff;border:1px solid #8a8a8a;box-sizing:border-box;border-radius:6px;"></div>
<div class="a" style="left:1588px;top:575px;width:37.3px;height:19px;background:#fbfbfb;border-radius:9px;"></div>
<div class="a t" style="left:1592.50px;top:577.00px;font-size:12px;line-height:16px;color:#000;letter-spacing:-0.542px;">Other</div>
<svg class="a" style="left:1593px;top:602px;" width="22" height="22"><path d="M11.3 4.4 A7 7 0 0 1 12.1 18.3 M9.9 18.3 A7 7 0 0 1 5.6 6.9" fill="none" stroke="#000" stroke-width="2.1"/><path d="M7.3 3.8 L11 0.7 V7 Z" fill="#000"/></svg>
<div class="a t" style="left:1589.35px;top:626.00px;font-size:12px;line-height:16px;color:#000;letter-spacing:-0.209px;">Reset</div>
<div class="a t" style="left:1589.40px;top:650.70px;font-size:12px;line-height:16px;color:#000;letter-spacing:0.203px;">Spatial reduce (none)</div>
<div class="a" style="left:1589px;top:671px;width:210px;height:24px;background:#fff;border:1px solid #7a7a7a;box-sizing:border-box;"></div>
<div class="a t" style="left:1595.00px;top:674.50px;font-size:14px;line-height:18px;color:#000;letter-spacing:-0.027px;">Automatic</div>
<svg class="a" style="left:1779px;top:679.0px;" width="14" height="9"><path d="M1 1 H13 L7 8 Z" fill="#000"/></svg>
<div class="a t" style="left:1589.40px;top:704.60px;font-size:12px;line-height:16px;color:#000;letter-spacing:0.294px;">Convert to</div>
<div class="a" style="left:1589px;top:725px;width:210px;height:25px;background:#fff;border:1px solid #7a7a7a;box-sizing:border-box;"></div>
<div class="a t" style="left:1595.00px;top:729.00px;font-size:14px;line-height:18px;color:#000;letter-spacing:-0.252px;">Absorbance</div>
<svg class="a" style="left:1779px;top:733.5px;" width="14" height="9"><path d="M1 1 H13 L7 8 Z" fill="#000"/></svg>
<div class="a t" style="left:1589.40px;top:760.00px;font-size:12px;line-height:16px;color:#000;letter-spacing:0.163px;">Segmentation</div>
<div class="a" style="left:1589px;top:780px;width:210px;height:25px;background:#fff;border:1px solid #7a7a7a;box-sizing:border-box;"></div>
<div class="a t" style="left:1595.00px;top:784.00px;font-size:14px;line-height:18px;color:#000;letter-spacing:-0.406px;">Sample - Nuts_Classification</div>
<svg class="a" style="left:1779px;top:788.5px;" width="14" height="9"><path d="M1 1 H13 L7 8 Z" fill="#000"/></svg>
<svg class="a" style="left:0;top:0" width="1916" height="1123"><defs><filter id="nz" x="0" y="0" width="100%" height="100%"><feTurbulence type="fractalNoise" baseFrequency="0.3" numOctaves="2" seed="7" result="n"/><feColorMatrix type="matrix" values="0 0 0 0 0  0 0 0 0 0  0 0 0 0 0  3.2 0 0 0 -1.75"/></filter><filter id="nz2" x="0" y="0" width="100%" height="100%"><feTurbulence type="fractalNoise" baseFrequency="0.035 0.02" numOctaves="3" seed="11"/><feColorMatrix type="matrix" values="0 0 0 0 0  0 0 0 0 0  0 0 0 0 0  2.4 0 0 0 -1.1"/></filter><filter id="rough" x="-10%" y="-10%" width="120%" height="120%"><feTurbulence type="fractalNoise" baseFrequency="0.11" numOctaves="2" seed="3" result="t"/><feDisplacementMap in="SourceGraphic" in2="t" scale="7" xChannelSelector="R" yChannelSelector="G"/></filter><filter id="rough1" x="-10%" y="-10%" width="120%" height="120%"><feTurbulence type="fractalNoise" baseFrequency="0.25" numOctaves="1" seed="5" result="t"/><feDisplacementMap in="SourceGraphic" in2="t" scale="2.2" xChannelSelector="R" yChannelSelector="G"/></filter><filter id="wD" x="0" y="0" width="100%" height="100%"><feTurbulence type="fractalNoise" baseFrequency="0.085" numOctaves="3" seed="21"/><feColorMatrix type="matrix" values="0 0 0 0 0.20  0 0 0 0 0.12  0 0 0 0 0.02  3.4 0 0 0 -1.75"/></filter><filter id="wL" x="0" y="0" width="100%" height="100%"><feTurbulence type="fractalNoise" baseFrequency="0.085" numOctaves="3" seed="21"/><feColorMatrix type="matrix" values="0 0 0 0 0.90  0 0 0 0 0.76  0 0 0 0 0.52  -3.4 0 0 0 1.35"/></filter><filter id="pD" x="0" y="0" width="100%" height="100%"><feTurbulence type="fractalNoise" baseFrequency="0.05 0.12" numOctaves="2" seed="9"/><feColorMatrix type="matrix" values="0 0 0 0 0.35  0 0 0 0 0.25  0 0 0 0 0.12  2.6 0 0 0 -1.3"/></filter><filter id="b2"><feGaussianBlur stdDeviation="2"/></filter><filter id="b4"><feGaussianBlur stdDeviation="4"/></filter><filter id="b14" x="-30%" y="-30%" width="160%" height="160%"><feGaussianBlur stdDeviation="14"/></filter><filter id="b1"><feGaussianBlur stdDeviation="1"/></filter><linearGradient id="bgx" x1="0" x2="1" y1="0" y2="0"><stop offset="0" stop-color="#c8c8c8"/><stop offset="0.145" stop-color="#c9c9c9"/><stop offset="0.153" stop-color="#cccccc"/><stop offset="0.4" stop-color="#d2d2d2"/><stop offset="0.6" stop-color="#d0d0d0"/><stop offset="0.695" stop-color="#cdcdcd"/><stop offset="0.70" stop-color="#c9c9c9"/><stop offset="1" stop-color="#c9c9c9"/></linearGradient><filter id="nzw" x="0" y="0" width="100%" height="100%"><feTurbulence type="fractalNoise" baseFrequency="0.3" numOctaves="1" seed="17"/><feColorMatrix type="matrix" values="0 0 0 0 1  0 0 0 0 1  0 0 0 0 1  0 3.0 0 0 -1.55"/></filter><filter id="nzv" x="0" y="0" width="100%" height="100%"><feTurbulence type="fractalNoise" baseFrequency="0.25 0.03" numOctaves="2" seed="29"/><feColorMatrix type="matrix" values="0 0 0 0 0.35  0 0 0 0 0.35  0 0 0 0 0.35  0 0 3.0 0 -1.55"/></filter><linearGradient id="g1" gradientUnits="userSpaceOnUse" x1="1066" y1="150" x2="1145" y2="150"><stop offset="0" stop-color="#b98a62"/><stop offset="0.15" stop-color="#e0b88e"/><stop offset="0.32" stop-color="#c0925f"/><stop offset="0.45" stop-color="#b58a55"/><stop offset="0.5" stop-color="#d2ac78"/><stop offset="0.8" stop-color="#c9a06e"/><stop offset="1" stop-color="#b88c5e"/></linearGradient><clipPath id="c1"><path d="M1074.6 124.0 C1063.8 126.0 1070.0 131.1 1068.5 136.3 C1067.0 141.5 1065.7 149.7 1065.8 155.3 C1065.9 161.0 1066.9 166.1 1069.2 170.2 C1071.5 174.3 1075.5 177.3 1079.4 179.7 C1083.4 182.1 1088.8 183.9 1092.9 184.5 C1097.0 185.1 1099.7 183.7 1103.8 183.1 C1107.9 182.5 1113.3 183.0 1117.4 181.1 C1121.5 179.2 1124.8 176.1 1128.2 171.6 C1131.6 167.1 1135.0 159.1 1137.7 153.9 C1140.4 148.7 1143.4 144.0 1144.5 140.4 C1145.6 136.8 1146.1 134.6 1144.5 132.2 C1142.9 129.8 1136.8 127.5 1135.0 126.1 C1133.2 124.7 1143.7 124.3 1133.6 124.0 C1123.5 123.7 1085.4 122.0 1074.6 124.0 Z"/></clipPath><linearGradient id="g2" gradientUnits="userSpaceOnUse" x1="1100" y1="200" x2="1160" y2="240"><stop offset="0" stop-color="#b49560"/><stop offset="0.35" stop-color="#d0b87c"/><stop offset="0.6" stop-color="#cdb77a"/><stop offset="1" stop-color="#b5945f"/></linearGradient><clipPath id="c2"><path d="M1088.9 228.6 C1089.1 226.6 1093.7 223.7 1097.0 220.4 C1100.3 217.1 1105.7 210.9 1110.6 206.8 C1115.5 202.7 1124.3 196.8 1129.6 193.3 C1134.9 189.9 1141.6 186.0 1145.9 183.8 C1150.2 181.6 1154.4 178.9 1158.1 178.4 C1161.8 177.9 1167.9 179.0 1170.3 180.4 C1172.7 181.8 1174.0 185.2 1174.3 187.9 C1174.6 190.6 1173.3 195.4 1172.3 198.7 C1171.3 202.0 1169.9 205.9 1167.6 209.6 C1165.3 213.3 1160.4 219.0 1156.7 223.1 C1153.0 227.2 1147.2 233.2 1143.1 236.7 C1139.0 240.2 1133.5 243.9 1129.6 246.2 C1125.7 248.5 1120.0 251.9 1117.4 252.3 C1114.9 252.7 1113.8 250.6 1112.6 248.9 C1111.4 247.2 1110.3 242.7 1109.2 240.8 C1108.1 238.9 1107.1 237.0 1105.1 236.0 C1103.1 235.0 1098.0 235.1 1095.6 234.0 C1093.2 232.9 1088.7 230.6 1088.9 228.6 Z"/></clipPath><linearGradient id="g3" gradientUnits="userSpaceOnUse" x1="1190" y1="140" x2="1240" y2="240"><stop offset="0" stop-color="#a88868"/><stop offset="0.3" stop-color="#b89c78"/><stop offset="0.55" stop-color="#c4b682"/><stop offset="0.8" stop-color="#bda07a"/><stop offset="1" stop-color="#a88864"/></linearGradient><clipPath id="c3"><path d="M1165.5 145.1 C1166.4 143.1 1168.2 142.1 1170.3 141.7 C1172.4 141.3 1176.5 141.6 1179.8 142.4 C1183.1 143.2 1187.9 145.4 1192.0 147.1 C1196.1 148.8 1202.4 151.9 1206.9 153.9 C1211.4 155.9 1217.3 158.4 1221.8 160.7 C1226.3 162.9 1232.3 166.5 1236.8 168.9 C1241.3 171.3 1247.4 174.8 1251.7 177.0 C1256.0 179.2 1262.0 181.8 1265.3 183.8 C1268.6 185.8 1272.1 188.4 1273.4 190.6 C1274.7 192.8 1274.5 196.9 1274.1 198.7 C1273.7 200.5 1270.0 201.4 1270.7 202.8 C1271.4 204.2 1276.8 206.4 1278.8 208.2 C1280.8 210.0 1283.4 212.6 1284.3 215.0 C1285.2 217.4 1285.7 222.1 1284.9 224.5 C1284.1 226.9 1281.3 229.7 1278.8 231.3 C1276.3 232.9 1271.7 234.8 1268.0 235.3 C1264.3 235.8 1258.7 235.5 1254.4 234.7 C1250.1 233.9 1243.8 231.2 1239.5 229.9 C1235.2 228.6 1229.8 227.0 1225.9 225.8 C1222.0 224.6 1217.4 223.6 1213.7 221.8 C1210.0 220.0 1205.2 216.7 1201.5 213.6 C1197.8 210.5 1192.8 205.1 1189.3 201.4 C1185.8 197.7 1181.2 192.6 1178.4 189.2 C1175.6 185.8 1172.2 181.7 1170.3 178.4 C1168.4 175.1 1166.4 171.0 1165.5 167.5 C1164.6 164.0 1164.2 158.7 1164.2 155.3 C1164.2 151.9 1164.6 147.1 1165.5 145.1 Z"/></clipPath><linearGradient id="g4" gradientUnits="userSpaceOnUse" x1="1180" y1="285" x2="1225" y2="365"><stop offset="0" stop-color="#948e7e"/><stop offset="0.22" stop-color="#b8b19e"/><stop offset="0.7" stop-color="#c2bba8"/><stop offset="0.9" stop-color="#dcd7ca"/><stop offset="1" stop-color="#b9b2a0"/></linearGradient><clipPath id="c4"><path d="M1181.2 279.4 C1178.7 280.3 1172.5 284.3 1169.1 286.8 C1165.7 289.3 1159.2 295.1 1156.0 298.1 C1152.8 301.1 1147.4 306.1 1144.8 309.3 C1142.2 312.5 1135.8 319.7 1136.3 322.4 C1136.8 325.1 1144.4 327.4 1148.5 329.9 C1152.6 332.4 1162.0 338.4 1167.2 341.1 C1172.4 343.8 1182.8 347.9 1187.8 350.4 C1192.8 352.9 1199.9 357.4 1204.6 359.8 C1209.3 362.2 1219.6 367.5 1223.3 368.2 C1227.0 368.9 1229.7 367.5 1232.7 365.4 C1235.7 363.3 1243.6 355.8 1245.8 352.3 C1248.0 348.8 1249.8 342.7 1249.5 339.2 C1249.2 335.7 1246.1 329.8 1243.9 326.1 C1241.7 322.4 1236.2 315.2 1232.7 311.2 C1229.2 307.2 1221.9 299.6 1217.7 296.2 C1213.5 292.8 1204.9 288.0 1200.9 285.9 C1196.9 283.8 1190.4 281.2 1187.8 280.3 C1185.2 279.4 1183.7 278.5 1181.2 279.4 Z"/></clipPath><linearGradient id="g5" gradientUnits="userSpaceOnUse" x1="1065" y1="345" x2="1150" y2="420"><stop offset="0" stop-color="#bcbcA6"/><stop offset="0.4" stop-color="#c8c8b4"/><stop offset="0.6" stop-color="#dadac8"/><stop offset="1" stop-color="#b4b498"/></linearGradient><clipPath id="c5"><path d="M1062.4 349.5 C1064.6 347.5 1071.8 345.6 1077.4 343.9 C1083.0 342.2 1089.2 339.8 1096.1 339.2 C1103.0 338.6 1111.7 339.3 1118.6 340.1 C1125.5 340.9 1132.2 341.9 1137.3 343.9 C1142.4 345.9 1146.8 348.4 1149.4 352.3 C1152.1 356.2 1152.9 361.7 1153.2 367.3 C1153.5 372.9 1152.7 380.4 1151.3 386.0 C1149.9 391.6 1147.8 396.2 1144.8 400.9 C1141.8 405.6 1137.9 410.4 1133.5 414.0 C1129.1 417.6 1123.6 421.1 1118.6 422.4 C1113.6 423.6 1108.3 422.9 1103.6 421.5 C1098.9 420.1 1094.5 417.7 1090.5 414.0 C1086.5 410.3 1082.3 404.1 1079.3 399.1 C1076.3 394.1 1074.6 389.1 1072.7 384.1 C1070.8 379.1 1069.5 373.8 1068.1 369.1 C1066.7 364.4 1065.2 359.3 1064.3 356.0 C1063.3 352.7 1060.2 351.5 1062.4 349.5 Z"/></clipPath><linearGradient id="g6" gradientUnits="userSpaceOnUse" x1="1180" y1="380" x2="1235" y2="465"><stop offset="0" stop-color="#6e6a64"/><stop offset="0.12" stop-color="#a39e98"/><stop offset="0.35" stop-color="#cdc6c2"/><stop offset="0.6" stop-color="#e4e0de"/><stop offset="1" stop-color="#c9c4c4"/></linearGradient><clipPath id="c6"><path d="M1170.9 386.0 C1172.0 382.6 1178.3 381.4 1182.2 380.3 C1186.1 379.2 1194.3 378.2 1199.0 378.5 C1203.7 378.8 1211.3 380.4 1215.8 382.2 C1220.3 384.0 1226.9 389.0 1230.8 391.6 C1234.7 394.2 1240.5 398.5 1243.9 400.9 C1247.3 403.3 1253.8 405.2 1255.1 408.4 C1256.4 411.5 1254.5 419.2 1253.2 423.4 C1251.9 427.6 1248.2 434.4 1245.8 438.3 C1243.4 442.2 1239.8 448.5 1236.4 451.4 C1233.0 454.3 1225.9 457.1 1221.4 458.9 C1216.9 460.7 1209.1 463.2 1204.6 464.5 C1200.1 465.8 1192.7 467.7 1189.6 468.2 C1186.5 468.7 1182.8 470.3 1182.2 468.2 C1181.6 466.1 1184.2 457.5 1185.0 453.3 C1185.8 449.1 1187.9 441.7 1187.8 438.3 C1187.7 434.9 1185.4 431.4 1184.0 429.0 C1182.6 426.6 1178.8 424.9 1177.5 421.5 C1176.2 418.1 1175.6 409.7 1174.7 404.7 C1173.8 399.7 1169.9 389.4 1170.9 386.0 Z"/></clipPath><radialGradient id="g7" gradientUnits="userSpaceOnUse" cx="1090" cy="530" r="38"><stop offset="0" stop-color="#f7f4f0"/><stop offset="0.6" stop-color="#ece7e0"/><stop offset="1" stop-color="#cfc6bc"/></radialGradient><clipPath id="c7"><path d="M1067.9 524.4 C1069.2 520.2 1071.8 515.8 1075.0 511.9 C1078.2 508.0 1083.2 503.9 1087.4 501.3 C1091.6 498.7 1095.8 496.9 1099.9 496.0 C1104.1 495.1 1108.5 494.5 1112.3 496.0 C1116.1 497.5 1120.4 501.0 1122.9 504.8 C1125.4 508.6 1127.1 514.5 1127.4 519.0 C1127.7 523.5 1127.2 527.6 1124.7 531.5 C1122.2 535.4 1116.7 539.1 1112.3 542.1 C1107.9 545.1 1103.4 547.6 1098.1 549.2 C1092.8 550.8 1084.7 551.9 1080.3 551.9 C1075.9 551.9 1073.7 551.7 1071.5 549.2 C1069.3 546.7 1067.6 540.9 1067.0 536.8 C1066.4 532.7 1066.6 528.5 1067.9 524.4 Z"/></clipPath><radialGradient id="g8" gradientUnits="userSpaceOnUse" cx="1150" cy="560" r="36"><stop offset="0" stop-color="#8a6428"/><stop offset="0.5" stop-color="#a37a40"/><stop offset="1" stop-color="#8c6630"/></radialGradient><clipPath id="c8"><path d="M1133.6 535.0 C1137.3 532.3 1145.5 531.2 1151.3 531.5 C1157.1 531.8 1167.8 534.1 1172.6 536.8 C1177.4 539.5 1181.3 545.2 1183.3 549.2 C1185.3 553.2 1186.2 559.4 1185.9 563.4 C1185.6 567.4 1183.8 572.3 1181.5 575.8 C1179.2 579.3 1174.0 583.8 1170.8 586.5 C1167.6 589.2 1162.9 591.5 1160.2 593.6 C1157.5 595.7 1155.2 600.7 1153.1 600.7 C1151.0 600.7 1148.7 595.7 1146.0 593.6 C1143.3 591.5 1138.3 588.9 1135.4 586.5 C1132.5 584.1 1128.2 581.1 1126.5 577.6 C1124.8 574.1 1123.8 567.7 1123.8 563.4 C1123.8 559.1 1125.0 553.5 1126.5 549.2 C1128.0 544.9 1129.9 537.7 1133.6 535.0 Z"/></clipPath><linearGradient id="g9" gradientUnits="userSpaceOnUse" x1="1200" y1="520" x2="1262" y2="575"><stop offset="0" stop-color="#d2d0b4"/><stop offset="0.4" stop-color="#e6e4d0"/><stop offset="0.7" stop-color="#e2e0c8"/><stop offset="1" stop-color="#c9c6a4"/></linearGradient><clipPath id="c9"><path d="M1191.3 527.9 C1191.3 523.9 1192.6 521.8 1195.7 519.9 C1198.8 518.0 1204.3 517.0 1209.9 516.4 C1215.5 515.8 1223.2 515.4 1229.4 516.4 C1235.6 517.4 1241.6 519.8 1247.2 522.6 C1252.8 525.4 1259.1 529.4 1263.1 533.2 C1267.1 537.1 1269.8 541.9 1271.1 545.7 C1272.4 549.6 1272.4 552.5 1271.1 556.3 C1269.8 560.1 1266.5 565.5 1263.1 568.7 C1259.7 572.0 1255.1 574.8 1250.7 575.8 C1246.3 576.8 1241.5 576.1 1236.5 574.9 C1231.5 573.7 1225.5 571.5 1220.5 568.7 C1215.5 565.9 1210.4 562.2 1206.3 558.1 C1202.2 554.0 1198.2 548.9 1195.7 543.9 C1193.2 538.9 1191.3 531.9 1191.3 527.9 Z"/></clipPath><radialGradient id="g10" gradientUnits="userSpaceOnUse" cx="1088" cy="668" r="52"><stop offset="0" stop-color="#f6f6ee"/><stop offset="0.55" stop-color="#e6e6d8"/><stop offset="0.85" stop-color="#d2d2b6"/><stop offset="1" stop-color="#bcbc94"/></radialGradient><clipPath id="c10"><path d="M1040.6 684.8 C1039.6 679.5 1040.9 670.8 1042.4 664.2 C1044.0 657.7 1046.5 651.1 1049.9 645.5 C1053.3 639.9 1059.0 633.7 1063.0 630.6 C1067.0 627.5 1069.5 626.5 1074.2 626.8 C1078.9 627.1 1085.5 630.5 1091.1 632.4 C1096.7 634.3 1102.9 635.3 1107.9 638.1 C1112.9 640.9 1117.2 644.9 1121.0 649.3 C1124.8 653.6 1128.1 659.2 1130.4 664.2 C1132.7 669.2 1134.7 674.5 1135.0 679.2 C1135.3 683.9 1133.9 688.9 1132.2 692.3 C1130.5 695.7 1128.4 697.9 1124.7 699.8 C1121.0 701.7 1115.1 703.5 1109.8 703.5 C1104.5 703.5 1097.0 698.9 1092.9 699.8 C1088.9 700.7 1088.6 707.2 1085.5 709.1 C1082.4 711.0 1078.2 711.6 1074.2 711.0 C1070.2 710.4 1065.6 707.9 1061.2 705.4 C1056.8 702.9 1051.5 699.4 1048.1 696.0 C1044.7 692.6 1041.5 690.1 1040.6 684.8 Z"/></clipPath><linearGradient id="g11" gradientUnits="userSpaceOnUse" x1="1155" y1="650" x2="1205" y2="690"><stop offset="0" stop-color="#9a9c94"/><stop offset="0.3" stop-color="#d4d8d4"/><stop offset="0.6" stop-color="#f0f2f0"/><stop offset="1" stop-color="#cfd2cc"/></linearGradient><clipPath id="c11"><path d="M1150.0 679.2 C1149.3 675.5 1150.9 664.7 1152.8 660.5 C1154.7 656.3 1160.5 650.4 1164.0 647.4 C1167.5 644.4 1175.7 639.5 1179.0 638.1 C1182.3 636.7 1185.9 635.6 1188.4 637.1 C1190.9 638.6 1195.5 645.7 1197.7 649.3 C1199.9 652.9 1203.8 660.7 1205.2 664.2 C1206.6 667.7 1209.0 673.5 1208.0 675.5 C1207.0 677.5 1200.6 678.0 1197.7 679.2 C1194.8 680.4 1189.0 682.3 1186.5 684.8 C1184.0 687.3 1181.0 696.3 1179.0 697.9 C1177.0 699.5 1174.2 698.2 1171.5 697.0 C1168.8 695.8 1161.3 691.0 1158.4 688.6 C1155.5 686.2 1150.7 682.9 1150.0 679.2 Z"/></clipPath><linearGradient id="g12" gradientUnits="userSpaceOnUse" x1="1150" y1="715" x2="1150" y2="805"><stop offset="0" stop-color="#a5a28a"/><stop offset="0.18" stop-color="#cfccb0"/><stop offset="0.5" stop-color="#e2dfc6"/><stop offset="0.85" stop-color="#dcd8ba"/><stop offset="1" stop-color="#b9b494"/></linearGradient><clipPath id="c12"><path d="M1107.0 759.6 C1107.3 754.6 1107.8 746.2 1109.8 740.9 C1111.8 735.6 1115.4 731.5 1119.1 727.8 C1122.8 724.1 1126.9 720.2 1132.2 718.5 C1137.5 716.8 1144.7 716.7 1150.9 717.6 C1157.1 718.5 1164.0 721.2 1169.6 724.1 C1175.2 727.0 1179.6 730.9 1184.6 735.3 C1189.6 739.7 1195.2 745.0 1199.6 750.3 C1204.0 755.6 1209.5 762.7 1210.8 767.1 C1212.0 771.5 1210.2 773.1 1207.1 776.5 C1204.0 779.9 1197.7 784.3 1192.1 787.7 C1186.5 791.1 1180.3 794.6 1173.4 797.1 C1166.5 799.6 1158.1 801.9 1150.9 802.7 C1143.7 803.5 1135.7 802.6 1130.4 801.7 C1125.1 800.8 1121.9 800.4 1119.1 797.1 C1116.3 793.8 1115.4 786.5 1113.5 782.1 C1111.6 777.7 1109.0 774.6 1107.9 770.9 C1106.8 767.1 1106.7 764.6 1107.0 759.6 Z"/></clipPath><linearGradient id="g13" gradientUnits="userSpaceOnUse" x1="1030" y1="930" x2="1125" y2="840"><stop offset="0" stop-color="#b08a48"/><stop offset="0.3" stop-color="#a27c46"/><stop offset="0.55" stop-color="#9a6a44"/><stop offset="0.8" stop-color="#a88250"/><stop offset="1" stop-color="#8e6e3c"/></linearGradient><clipPath id="c13"><path d="M1017.6 892.5 C1019.1 889.2 1028.3 878.2 1031.4 874.9 C1034.5 871.6 1046.7 861.8 1049.0 859.2 C1051.3 856.7 1053.3 849.6 1054.9 849.4 C1056.5 849.2 1062.4 857.2 1064.7 857.2 C1067.0 857.2 1076.1 851.2 1078.4 849.4 C1080.8 847.6 1085.7 841.4 1088.2 839.6 C1090.8 837.8 1100.8 832.4 1103.9 831.8 C1107.0 831.2 1116.8 832.5 1119.5 833.7 C1122.2 834.9 1129.7 841.0 1131.3 843.5 C1132.9 846.0 1135.6 855.9 1135.2 859.2 C1134.8 862.5 1129.6 874.1 1127.4 876.8 C1125.2 879.5 1115.9 885.0 1113.7 886.6 C1111.5 888.2 1107.6 890.9 1105.8 892.5 C1104.0 894.1 1098.2 900.9 1096.0 902.3 C1093.8 903.7 1086.1 905.0 1084.3 906.2 C1082.5 907.4 1080.4 912.7 1078.4 914.1 C1076.4 915.5 1067.4 918.7 1064.7 919.9 C1062.0 921.1 1053.8 924.4 1051.0 925.8 C1048.2 927.2 1040.0 932.7 1037.2 933.7 C1034.5 934.7 1025.4 936.8 1023.5 935.6 C1021.6 934.4 1019.3 924.6 1018.6 921.9 C1017.9 919.2 1016.8 911.1 1016.7 908.2 C1016.6 905.3 1016.1 895.8 1017.6 892.5 Z"/></clipPath><linearGradient id="g14" gradientUnits="userSpaceOnUse" x1="1155" y1="870" x2="1275" y2="870"><stop offset="0" stop-color="#7e6228"/><stop offset="0.3" stop-color="#92702e"/><stop offset="0.5" stop-color="#9a7a34"/><stop offset="0.75" stop-color="#96703a"/><stop offset="1" stop-color="#806028"/></linearGradient><clipPath id="c14"><path d="M1151.9 867.0 C1152.3 863.5 1156.2 853.9 1158.7 851.4 C1161.2 848.9 1172.5 843.0 1176.4 841.6 C1180.3 840.2 1194.8 837.4 1197.9 837.6 C1201.0 837.8 1205.5 843.5 1207.7 843.5 C1209.9 843.5 1216.8 838.4 1219.5 837.6 C1222.2 836.8 1231.7 836.2 1235.2 835.7 C1238.7 835.2 1251.1 832.6 1254.8 832.7 C1258.5 832.8 1270.2 835.0 1272.4 836.7 C1274.6 838.4 1276.5 847.1 1276.3 849.4 C1276.1 851.6 1272.4 857.6 1270.4 859.2 C1268.4 860.8 1257.7 863.9 1256.7 865.1 C1255.7 866.3 1259.1 869.6 1260.6 871.0 C1262.1 872.4 1270.6 876.6 1271.4 878.8 C1272.2 880.9 1269.8 889.8 1268.5 892.5 C1267.2 895.2 1261.2 904.3 1258.7 906.2 C1256.2 908.1 1245.9 911.3 1243.0 911.1 C1240.1 910.9 1232.2 905.8 1229.3 904.3 C1226.4 902.8 1216.5 898.2 1213.6 896.4 C1210.7 894.6 1202.6 887.0 1199.9 886.6 C1197.2 886.2 1189.5 891.7 1186.2 892.5 C1182.9 893.3 1169.7 895.1 1166.6 894.5 C1163.5 893.9 1156.3 889.4 1154.8 886.6 C1153.3 883.9 1151.5 870.5 1151.9 867.0 Z"/></clipPath><linearGradient id="g15" gradientUnits="userSpaceOnUse" x1="1070" y1="980" x2="1190" y2="980"><stop offset="0" stop-color="#8e6c34"/><stop offset="0.3" stop-color="#a27c44"/><stop offset="0.5" stop-color="#94723a"/><stop offset="0.75" stop-color="#a58048"/><stop offset="1" stop-color="#8c6a30"/></linearGradient><clipPath id="c15"><path d="M1070.5 951.3 C1070.3 949.1 1072.9 944.1 1074.5 943.5 C1076.1 942.9 1083.9 945.6 1086.2 945.4 C1088.5 945.2 1096.4 943.5 1098.0 941.5 C1099.6 939.5 1099.9 927.8 1101.9 925.8 C1103.9 923.8 1114.7 922.1 1117.6 921.9 C1120.5 921.7 1129.5 922.3 1131.3 923.9 C1133.1 925.5 1133.4 936.4 1135.2 937.6 C1137.0 938.8 1145.8 936.5 1148.9 935.6 C1152.0 934.7 1163.7 928.8 1166.6 928.8 C1169.5 928.8 1176.4 933.6 1178.3 935.6 C1180.2 937.6 1184.4 946.4 1185.2 949.3 C1186.0 952.2 1187.7 962.8 1186.2 965.0 C1184.7 967.2 1171.5 969.5 1170.5 970.9 C1169.5 972.3 1176.8 976.9 1176.4 978.7 C1176.0 980.5 1165.8 987.3 1166.6 988.5 C1167.4 989.7 1181.8 989.1 1184.2 990.5 C1186.7 991.9 1190.7 999.7 1191.1 1002.2 C1191.5 1004.8 1190.0 1013.8 1188.1 1016.0 C1186.2 1018.2 1175.5 1022.4 1172.4 1023.8 C1169.3 1025.2 1160.3 1028.5 1156.8 1029.7 C1153.3 1030.9 1141.1 1035.0 1137.2 1035.6 C1133.3 1036.2 1121.1 1036.4 1117.6 1035.6 C1114.1 1034.8 1105.2 1029.5 1101.9 1027.7 C1098.6 1025.9 1087.0 1020.0 1084.3 1017.9 C1081.6 1015.8 1076.0 1008.6 1074.5 1006.2 C1073.0 1003.9 1069.4 996.4 1069.6 994.4 C1069.8 992.4 1074.0 987.6 1076.4 986.6 C1078.9 985.6 1090.8 985.2 1094.1 984.6 C1097.4 984.0 1108.5 981.9 1109.7 980.7 C1110.9 979.5 1108.0 973.7 1105.8 972.9 C1103.6 972.1 1091.1 973.7 1088.2 972.9 C1085.3 972.1 1078.2 967.2 1076.4 965.0 C1074.6 962.8 1070.7 953.4 1070.5 951.3 Z"/></clipPath><clipPath id="imclip"><rect x="898" y="125" width="584" height="912"/></clipPath></defs><g clip-path="url(#imclip)"><rect x="898" y="125" width="584" height="912" fill="url(#bgx)"/><ellipse cx="1160" cy="190" rx="120" ry="80" fill="#e2e2e2" opacity="0.4" filter="url(#b14)"/><ellipse cx="1160" cy="380" rx="110" ry="110" fill="#e2e2e2" opacity="0.4" filter="url(#b14)"/><ellipse cx="1160" cy="550" rx="110" ry="60" fill="#e2e2e2" opacity="0.4" filter="url(#b14)"/><ellipse cx="1130" cy="720" rx="110" ry="110" fill="#e2e2e2" opacity="0.4" filter="url(#b14)"/><ellipse cx="1150" cy="930" rx="140" ry="90" fill="#e2e2e2" opacity="0.4" filter="url(#b14)"/><rect x="898" y="125" width="584" height="912" fill="#707070" filter="url(#nz)" opacity="0.2"/><rect x="898" y="125" width="584" height="912" fill="#aaa" filter="url(#nz2)" opacity="0.07"/><rect x="898" y="125" width="584" height="912" filter="url(#nzw)" opacity="0.22"/><rect x="898" y="125" width="90" height="912" filter="url(#nzv)" opacity="0.3"/><rect x="1300" y="125" width="182" height="912" filter="url(#nzv)" opacity="0.25"/><rect x="985" y="125" width="1.5" height="912" fill="#888" opacity="0.22"/><rect x="940" y="125" width="1.5" height="912" fill="#888" opacity="0.08"/><rect x="1250" y="125" width="1.5" height="912" fill="#888" opacity="0.06"/><rect x="1306" y="125" width="1.5" height="912" fill="#888" opacity="0.2"/><rect x="1373" y="125" width="1.5" height="912" fill="#888" opacity="0.1"/><rect x="1443" y="125" width="1.5" height="912" fill="#888" opacity="0.1"/><ellipse cx="1332" cy="607" rx="4.5" ry="3.6" fill="#333" filter="url(#b1)"/><ellipse cx="1336" cy="612" rx="3" ry="2.4" fill="#444" filter="url(#b1)"/><ellipse cx="1164.6" cy="489" rx="2" ry="1.6" fill="#666" filter="url(#b1)"/><ellipse cx="1167.3" cy="594.5" rx="2.2" ry="1.8" fill="#777" filter="url(#b1)"/><ellipse cx="1150" cy="912" rx="4.5" ry="3.6" fill="#6a6a6a" filter="url(#b1)"/><ellipse cx="1120" cy="326" rx="1.5" ry="1.2" fill="#777" filter="url(#b1)"/><ellipse cx="1250" cy="230" rx="1.5" ry="1.2" fill="#888" filter="url(#b1)"/><g filter="url(#rough1)"><path d="M1074.6 124.0 C1063.8 126.0 1070.0 131.1 1068.5 136.3 C1067.0 141.5 1065.7 149.7 1065.8 155.3 C1065.9 161.0 1066.9 166.1 1069.2 170.2 C1071.5 174.3 1075.5 177.3 1079.4 179.7 C1083.4 182.1 1088.8 183.9 1092.9 184.5 C1097.0 185.1 1099.7 183.7 1103.8 183.1 C1107.9 182.5 1113.3 183.0 1117.4 181.1 C1121.5 179.2 1124.8 176.1 1128.2 171.6 C1131.6 167.1 1135.0 159.1 1137.7 153.9 C1140.4 148.7 1143.4 144.0 1144.5 140.4 C1145.6 136.8 1146.1 134.6 1144.5 132.2 C1142.9 129.8 1136.8 127.5 1135.0 126.1 C1133.2 124.7 1143.7 124.3 1133.6 124.0 C1123.5 123.7 1085.4 122.0 1074.6 124.0 Z" fill="url(#g1)"/><g clip-path="url(#c1)"><path d="M1098 128 L1099 184" stroke="#5a4020" stroke-width="1.6" fill="none"/><path d="M1070 126 H1146 V134 L1100 138 L1072 132Z" fill="#a07a58" opacity="0.6" filter="url(#b1)"/><ellipse cx="1110" cy="176" rx="8" ry="4" fill="#f2dcb0" opacity="0.7" filter="url(#b1)"/><ellipse cx="1073" cy="152" rx="3" ry="8" fill="#f0d8b0" opacity="0.7" filter="url(#b1)"/><rect x="1062" y="120" width="87" height="68" filter="url(#pD)" opacity="0.35"/></g><path d="M1074.6 124.0 C1063.8 126.0 1070.0 131.1 1068.5 136.3 C1067.0 141.5 1065.7 149.7 1065.8 155.3 C1065.9 161.0 1066.9 166.1 1069.2 170.2 C1071.5 174.3 1075.5 177.3 1079.4 179.7 C1083.4 182.1 1088.8 183.9 1092.9 184.5 C1097.0 185.1 1099.7 183.7 1103.8 183.1 C1107.9 182.5 1113.3 183.0 1117.4 181.1 C1121.5 179.2 1124.8 176.1 1128.2 171.6 C1131.6 167.1 1135.0 159.1 1137.7 153.9 C1140.4 148.7 1143.4 144.0 1144.5 140.4 C1145.6 136.8 1146.1 134.6 1144.5 132.2 C1142.9 129.8 1136.8 127.5 1135.0 126.1 C1133.2 124.7 1143.7 124.3 1133.6 124.0 C1123.5 123.7 1085.4 122.0 1074.6 124.0 Z" fill="none" stroke="#1a1408" stroke-width="1.6" stroke-linejoin="round" opacity="0.9"/></g><g filter="url(#rough1)"><path d="M1088.9 228.6 C1089.1 226.6 1093.7 223.7 1097.0 220.4 C1100.3 217.1 1105.7 210.9 1110.6 206.8 C1115.5 202.7 1124.3 196.8 1129.6 193.3 C1134.9 189.9 1141.6 186.0 1145.9 183.8 C1150.2 181.6 1154.4 178.9 1158.1 178.4 C1161.8 177.9 1167.9 179.0 1170.3 180.4 C1172.7 181.8 1174.0 185.2 1174.3 187.9 C1174.6 190.6 1173.3 195.4 1172.3 198.7 C1171.3 202.0 1169.9 205.9 1167.6 209.6 C1165.3 213.3 1160.4 219.0 1156.7 223.1 C1153.0 227.2 1147.2 233.2 1143.1 236.7 C1139.0 240.2 1133.5 243.9 1129.6 246.2 C1125.7 248.5 1120.0 251.9 1117.4 252.3 C1114.9 252.7 1113.8 250.6 1112.6 248.9 C1111.4 247.2 1110.3 242.7 1109.2 240.8 C1108.1 238.9 1107.1 237.0 1105.1 236.0 C1103.1 235.0 1098.0 235.1 1095.6 234.0 C1093.2 232.9 1088.7 230.6 1088.9 228.6 Z" fill="url(#g2)"/><g clip-path="url(#c2)"><ellipse cx="1134" cy="206" rx="5" ry="3" fill="#4a2a10" filter="url(#b1)"/><path d="M1100 232 L1150 205" stroke="#ddd08a" stroke-width="5" opacity="0.6" filter="url(#b2)"/><path d="M1150 190 L1168 184" stroke="#e8c8a0" stroke-width="5" opacity="0.6" filter="url(#b2)"/><rect x="1085" y="174" width="93" height="82" filter="url(#pD)" opacity="0.3"/></g><path d="M1088.9 228.6 C1089.1 226.6 1093.7 223.7 1097.0 220.4 C1100.3 217.1 1105.7 210.9 1110.6 206.8 C1115.5 202.7 1124.3 196.8 1129.6 193.3 C1134.9 189.9 1141.6 186.0 1145.9 183.8 C1150.2 181.6 1154.4 178.9 1158.1 178.4 C1161.8 177.9 1167.9 179.0 1170.3 180.4 C1172.7 181.8 1174.0 185.2 1174.3 187.9 C1174.6 190.6 1173.3 195.4 1172.3 198.7 C1171.3 202.0 1169.9 205.9 1167.6 209.6 C1165.3 213.3 1160.4 219.0 1156.7 223.1 C1153.0 227.2 1147.2 233.2 1143.1 236.7 C1139.0 240.2 1133.5 243.9 1129.6 246.2 C1125.7 248.5 1120.0 251.9 1117.4 252.3 C1114.9 252.7 1113.8 250.6 1112.6 248.9 C1111.4 247.2 1110.3 242.7 1109.2 240.8 C1108.1 238.9 1107.1 237.0 1105.1 236.0 C1103.1 235.0 1098.0 235.1 1095.6 234.0 C1093.2 232.9 1088.7 230.6 1088.9 228.6 Z" fill="none" stroke="#1a1408" stroke-width="1.6" stroke-linejoin="round" opacity="0.9"/></g><g filter="url(#rough1)"><path d="M1165.5 145.1 C1166.4 143.1 1168.2 142.1 1170.3 141.7 C1172.4 141.3 1176.5 141.6 1179.8 142.4 C1183.1 143.2 1187.9 145.4 1192.0 147.1 C1196.1 148.8 1202.4 151.9 1206.9 153.9 C1211.4 155.9 1217.3 158.4 1221.8 160.7 C1226.3 162.9 1232.3 166.5 1236.8 168.9 C1241.3 171.3 1247.4 174.8 1251.7 177.0 C1256.0 179.2 1262.0 181.8 1265.3 183.8 C1268.6 185.8 1272.1 188.4 1273.4 190.6 C1274.7 192.8 1274.5 196.9 1274.1 198.7 C1273.7 200.5 1270.0 201.4 1270.7 202.8 C1271.4 204.2 1276.8 206.4 1278.8 208.2 C1280.8 210.0 1283.4 212.6 1284.3 215.0 C1285.2 217.4 1285.7 222.1 1284.9 224.5 C1284.1 226.9 1281.3 229.7 1278.8 231.3 C1276.3 232.9 1271.7 234.8 1268.0 235.3 C1264.3 235.8 1258.7 235.5 1254.4 234.7 C1250.1 233.9 1243.8 231.2 1239.5 229.9 C1235.2 228.6 1229.8 227.0 1225.9 225.8 C1222.0 224.6 1217.4 223.6 1213.7 221.8 C1210.0 220.0 1205.2 216.7 1201.5 213.6 C1197.8 210.5 1192.8 205.1 1189.3 201.4 C1185.8 197.7 1181.2 192.6 1178.4 189.2 C1175.6 185.8 1172.2 181.7 1170.3 178.4 C1168.4 175.1 1166.4 171.0 1165.5 167.5 C1164.6 164.0 1164.2 158.7 1164.2 155.3 C1164.2 151.9 1164.6 147.1 1165.5 145.1 Z" fill="url(#g3)"/><g clip-path="url(#c3)"><path d="M1190 165 L1255 200" stroke="#c6c080" stroke-width="12" opacity="0.7" filter="url(#b4)"/><ellipse cx="1262" cy="202" rx="9" ry="10" fill="#e0c0a0" opacity="0.75" filter="url(#b2)"/><path d="M1168 146 L1270 188" stroke="#9c7c60" stroke-width="6" opacity="0.6" filter="url(#b2)"/><rect x="1160" y="138" width="129" height="102" filter="url(#pD)" opacity="0.35"/></g><path d="M1165.5 145.1 C1166.4 143.1 1168.2 142.1 1170.3 141.7 C1172.4 141.3 1176.5 141.6 1179.8 142.4 C1183.1 143.2 1187.9 145.4 1192.0 147.1 C1196.1 148.8 1202.4 151.9 1206.9 153.9 C1211.4 155.9 1217.3 158.4 1221.8 160.7 C1226.3 162.9 1232.3 166.5 1236.8 168.9 C1241.3 171.3 1247.4 174.8 1251.7 177.0 C1256.0 179.2 1262.0 181.8 1265.3 183.8 C1268.6 185.8 1272.1 188.4 1273.4 190.6 C1274.7 192.8 1274.5 196.9 1274.1 198.7 C1273.7 200.5 1270.0 201.4 1270.7 202.8 C1271.4 204.2 1276.8 206.4 1278.8 208.2 C1280.8 210.0 1283.4 212.6 1284.3 215.0 C1285.2 217.4 1285.7 222.1 1284.9 224.5 C1284.1 226.9 1281.3 229.7 1278.8 231.3 C1276.3 232.9 1271.7 234.8 1268.0 235.3 C1264.3 235.8 1258.7 235.5 1254.4 234.7 C1250.1 233.9 1243.8 231.2 1239.5 229.9 C1235.2 228.6 1229.8 227.0 1225.9 225.8 C1222.0 224.6 1217.4 223.6 1213.7 221.8 C1210.0 220.0 1205.2 216.7 1201.5 213.6 C1197.8 210.5 1192.8 205.1 1189.3 201.4 C1185.8 197.7 1181.2 192.6 1178.4 189.2 C1175.6 185.8 1172.2 181.7 1170.3 178.4 C1168.4 175.1 1166.4 171.0 1165.5 167.5 C1164.6 164.0 1164.2 158.7 1164.2 155.3 C1164.2 151.9 1164.6 147.1 1165.5 145.1 Z" fill="none" stroke="#1a1408" stroke-width="1.6" stroke-linejoin="round" opacity="0.9"/></g><g filter="url(#rough1)"><path d="M1181.2 279.4 C1178.7 280.3 1172.5 284.3 1169.1 286.8 C1165.7 289.3 1159.2 295.1 1156.0 298.1 C1152.8 301.1 1147.4 306.1 1144.8 309.3 C1142.2 312.5 1135.8 319.7 1136.3 322.4 C1136.8 325.1 1144.4 327.4 1148.5 329.9 C1152.6 332.4 1162.0 338.4 1167.2 341.1 C1172.4 343.8 1182.8 347.9 1187.8 350.4 C1192.8 352.9 1199.9 357.4 1204.6 359.8 C1209.3 362.2 1219.6 367.5 1223.3 368.2 C1227.0 368.9 1229.7 367.5 1232.7 365.4 C1235.7 363.3 1243.6 355.8 1245.8 352.3 C1248.0 348.8 1249.8 342.7 1249.5 339.2 C1249.2 335.7 1246.1 329.8 1243.9 326.1 C1241.7 322.4 1236.2 315.2 1232.7 311.2 C1229.2 307.2 1221.9 299.6 1217.7 296.2 C1213.5 292.8 1204.9 288.0 1200.9 285.9 C1196.9 283.8 1190.4 281.2 1187.8 280.3 C1185.2 279.4 1183.7 278.5 1181.2 279.4 Z" fill="url(#g4)"/><g clip-path="url(#c4)"><path d="M1185 282 L1250 335" stroke="#7d7768" stroke-width="7" opacity="0.7" filter="url(#b2)"/><ellipse cx="1228" cy="352" rx="12" ry="7" fill="#e8e4d8" opacity="0.8" filter="url(#b2)" transform="rotate(25 1228 352)"/><path d="M1140 322 L1225 366" stroke="#8a8474" stroke-width="4" opacity="0.5" filter="url(#b2)"/><path d="M1181.2 279.4 C1178.7 280.3 1172.5 284.3 1169.1 286.8 C1165.7 289.3 1159.2 295.1 1156.0 298.1 C1152.8 301.1 1147.4 306.1 1144.8 309.3 C1142.2 312.5 1135.8 319.7 1136.3 322.4 C1136.8 325.1 1144.4 327.4 1148.5 329.9 C1152.6 332.4 1162.0 338.4 1167.2 341.1 C1172.4 343.8 1182.8 347.9 1187.8 350.4 C1192.8 352.9 1199.9 357.4 1204.6 359.8 C1209.3 362.2 1219.6 367.5 1223.3 368.2 C1227.0 368.9 1229.7 367.5 1232.7 365.4 C1235.7 363.3 1243.6 355.8 1245.8 352.3 C1248.0 348.8 1249.8 342.7 1249.5 339.2 C1249.2 335.7 1246.1 329.8 1243.9 326.1 C1241.7 322.4 1236.2 315.2 1232.7 311.2 C1229.2 307.2 1221.9 299.6 1217.7 296.2 C1213.5 292.8 1204.9 288.0 1200.9 285.9 C1196.9 283.8 1190.4 281.2 1187.8 280.3 C1185.2 279.4 1183.7 278.5 1181.2 279.4 Z" fill="none" stroke="#6e6858" stroke-width="3.5" opacity="0.55" filter="url(#b1)"/><rect x="1132" y="275" width="121" height="97" filter="url(#pD)" opacity="0.18"/></g><path d="M1181.2 279.4 C1178.7 280.3 1172.5 284.3 1169.1 286.8 C1165.7 289.3 1159.2 295.1 1156.0 298.1 C1152.8 301.1 1147.4 306.1 1144.8 309.3 C1142.2 312.5 1135.8 319.7 1136.3 322.4 C1136.8 325.1 1144.4 327.4 1148.5 329.9 C1152.6 332.4 1162.0 338.4 1167.2 341.1 C1172.4 343.8 1182.8 347.9 1187.8 350.4 C1192.8 352.9 1199.9 357.4 1204.6 359.8 C1209.3 362.2 1219.6 367.5 1223.3 368.2 C1227.0 368.9 1229.7 367.5 1232.7 365.4 C1235.7 363.3 1243.6 355.8 1245.8 352.3 C1248.0 348.8 1249.8 342.7 1249.5 339.2 C1249.2 335.7 1246.1 329.8 1243.9 326.1 C1241.7 322.4 1236.2 315.2 1232.7 311.2 C1229.2 307.2 1221.9 299.6 1217.7 296.2 C1213.5 292.8 1204.9 288.0 1200.9 285.9 C1196.9 283.8 1190.4 281.2 1187.8 280.3 C1185.2 279.4 1183.7 278.5 1181.2 279.4 Z" fill="none" stroke="#1a1408" stroke-width="1.3" stroke-linejoin="round" opacity="0.9"/></g><g filter="url(#rough1)"><path d="M1062.4 349.5 C1064.6 347.5 1071.8 345.6 1077.4 343.9 C1083.0 342.2 1089.2 339.8 1096.1 339.2 C1103.0 338.6 1111.7 339.3 1118.6 340.1 C1125.5 340.9 1132.2 341.9 1137.3 343.9 C1142.4 345.9 1146.8 348.4 1149.4 352.3 C1152.1 356.2 1152.9 361.7 1153.2 367.3 C1153.5 372.9 1152.7 380.4 1151.3 386.0 C1149.9 391.6 1147.8 396.2 1144.8 400.9 C1141.8 405.6 1137.9 410.4 1133.5 414.0 C1129.1 417.6 1123.6 421.1 1118.6 422.4 C1113.6 423.6 1108.3 422.9 1103.6 421.5 C1098.9 420.1 1094.5 417.7 1090.5 414.0 C1086.5 410.3 1082.3 404.1 1079.3 399.1 C1076.3 394.1 1074.6 389.1 1072.7 384.1 C1070.8 379.1 1069.5 373.8 1068.1 369.1 C1066.7 364.4 1065.2 359.3 1064.3 356.0 C1063.3 352.7 1060.2 351.5 1062.4 349.5 Z" fill="url(#g5)"/><g clip-path="url(#c5)"><path d="M1108 355 Q1125 345 1138 360 L1140 392 Q1120 400 1112 385 Z" fill="#f4f4e6" opacity="0.9" filter="url(#b2)"/><path d="M1068 352 L1110 382" stroke="#8e8e66" stroke-width="4" opacity="0.7" filter="url(#b2)"/><path d="M1075 375 L1105 405" stroke="#eeeee0" stroke-width="5" opacity="0.7" filter="url(#b2)"/><ellipse cx="1115" cy="408" rx="9" ry="5" fill="#85854e" opacity="0.75" filter="url(#b2)"/><path d="M1120 342 L1106 362 L1114 395 L1100 418" stroke="#a5a570" stroke-width="1.5" fill="none" opacity="0.8"/><path d="M1152 350 V400" stroke="#d8d8a8" stroke-width="5" opacity="0.7" filter="url(#b1)"/><path d="M1066 352 L1092 412 M1072 350 L1085 372" stroke="#77774a" stroke-width="4" opacity="0.55" filter="url(#b2)"/><path d="M1062.4 349.5 C1064.6 347.5 1071.8 345.6 1077.4 343.9 C1083.0 342.2 1089.2 339.8 1096.1 339.2 C1103.0 338.6 1111.7 339.3 1118.6 340.1 C1125.5 340.9 1132.2 341.9 1137.3 343.9 C1142.4 345.9 1146.8 348.4 1149.4 352.3 C1152.1 356.2 1152.9 361.7 1153.2 367.3 C1153.5 372.9 1152.7 380.4 1151.3 386.0 C1149.9 391.6 1147.8 396.2 1144.8 400.9 C1141.8 405.6 1137.9 410.4 1133.5 414.0 C1129.1 417.6 1123.6 421.1 1118.6 422.4 C1113.6 423.6 1108.3 422.9 1103.6 421.5 C1098.9 420.1 1094.5 417.7 1090.5 414.0 C1086.5 410.3 1082.3 404.1 1079.3 399.1 C1076.3 394.1 1074.6 389.1 1072.7 384.1 C1070.8 379.1 1069.5 373.8 1068.1 369.1 C1066.7 364.4 1065.2 359.3 1064.3 356.0 C1063.3 352.7 1060.2 351.5 1062.4 349.5 Z" fill="none" stroke="#7c7c4c" stroke-width="3.5" opacity="0.6" filter="url(#b1)"/></g><path d="M1062.4 349.5 C1064.6 347.5 1071.8 345.6 1077.4 343.9 C1083.0 342.2 1089.2 339.8 1096.1 339.2 C1103.0 338.6 1111.7 339.3 1118.6 340.1 C1125.5 340.9 1132.2 341.9 1137.3 343.9 C1142.4 345.9 1146.8 348.4 1149.4 352.3 C1152.1 356.2 1152.9 361.7 1153.2 367.3 C1153.5 372.9 1152.7 380.4 1151.3 386.0 C1149.9 391.6 1147.8 396.2 1144.8 400.9 C1141.8 405.6 1137.9 410.4 1133.5 414.0 C1129.1 417.6 1123.6 421.1 1118.6 422.4 C1113.6 423.6 1108.3 422.9 1103.6 421.5 C1098.9 420.1 1094.5 417.7 1090.5 414.0 C1086.5 410.3 1082.3 404.1 1079.3 399.1 C1076.3 394.1 1074.6 389.1 1072.7 384.1 C1070.8 379.1 1069.5 373.8 1068.1 369.1 C1066.7 364.4 1065.2 359.3 1064.3 356.0 C1063.3 352.7 1060.2 351.5 1062.4 349.5 Z" fill="none" stroke="#1a1408" stroke-width="1.3" stroke-linejoin="round" opacity="0.9"/></g><g filter="url(#rough1)"><path d="M1170.9 386.0 C1172.0 382.6 1178.3 381.4 1182.2 380.3 C1186.1 379.2 1194.3 378.2 1199.0 378.5 C1203.7 378.8 1211.3 380.4 1215.8 382.2 C1220.3 384.0 1226.9 389.0 1230.8 391.6 C1234.7 394.2 1240.5 398.5 1243.9 400.9 C1247.3 403.3 1253.8 405.2 1255.1 408.4 C1256.4 411.5 1254.5 419.2 1253.2 423.4 C1251.9 427.6 1248.2 434.4 1245.8 438.3 C1243.4 442.2 1239.8 448.5 1236.4 451.4 C1233.0 454.3 1225.9 457.1 1221.4 458.9 C1216.9 460.7 1209.1 463.2 1204.6 464.5 C1200.1 465.8 1192.7 467.7 1189.6 468.2 C1186.5 468.7 1182.8 470.3 1182.2 468.2 C1181.6 466.1 1184.2 457.5 1185.0 453.3 C1185.8 449.1 1187.9 441.7 1187.8 438.3 C1187.7 434.9 1185.4 431.4 1184.0 429.0 C1182.6 426.6 1178.8 424.9 1177.5 421.5 C1176.2 418.1 1175.6 409.7 1174.7 404.7 C1173.8 399.7 1169.9 389.4 1170.9 386.0 Z" fill="url(#g6)"/><g clip-path="url(#c6)"><path d="M1254 410 L1190 455" stroke="#f6f4f4" stroke-width="9" opacity="0.85" filter="url(#b2)"/><path d="M1254 408 L1215 395" stroke="#f2f0f0" stroke-width="5" opacity="0.7" filter="url(#b2)"/><path d="M1184 462 L1250 440" stroke="#8a8480" stroke-width="5" opacity="0.55" filter="url(#b2)"/><path d="M1172 388 Q1198 374 1232 394" stroke="#3e3a34" stroke-width="7" fill="none" opacity="0.6" filter="url(#b2)"/><path d="M1170.9 386.0 C1172.0 382.6 1178.3 381.4 1182.2 380.3 C1186.1 379.2 1194.3 378.2 1199.0 378.5 C1203.7 378.8 1211.3 380.4 1215.8 382.2 C1220.3 384.0 1226.9 389.0 1230.8 391.6 C1234.7 394.2 1240.5 398.5 1243.9 400.9 C1247.3 403.3 1253.8 405.2 1255.1 408.4 C1256.4 411.5 1254.5 419.2 1253.2 423.4 C1251.9 427.6 1248.2 434.4 1245.8 438.3 C1243.4 442.2 1239.8 448.5 1236.4 451.4 C1233.0 454.3 1225.9 457.1 1221.4 458.9 C1216.9 460.7 1209.1 463.2 1204.6 464.5 C1200.1 465.8 1192.7 467.7 1189.6 468.2 C1186.5 468.7 1182.8 470.3 1182.2 468.2 C1181.6 466.1 1184.2 457.5 1185.0 453.3 C1185.8 449.1 1187.9 441.7 1187.8 438.3 C1187.7 434.9 1185.4 431.4 1184.0 429.0 C1182.6 426.6 1178.8 424.9 1177.5 421.5 C1176.2 418.1 1175.6 409.7 1174.7 404.7 C1173.8 399.7 1169.9 389.4 1170.9 386.0 Z" fill="none" stroke="#5c5852" stroke-width="3" opacity="0.5" filter="url(#b1)"/></g><path d="M1170.9 386.0 C1172.0 382.6 1178.3 381.4 1182.2 380.3 C1186.1 379.2 1194.3 378.2 1199.0 378.5 C1203.7 378.8 1211.3 380.4 1215.8 382.2 C1220.3 384.0 1226.9 389.0 1230.8 391.6 C1234.7 394.2 1240.5 398.5 1243.9 400.9 C1247.3 403.3 1253.8 405.2 1255.1 408.4 C1256.4 411.5 1254.5 419.2 1253.2 423.4 C1251.9 427.6 1248.2 434.4 1245.8 438.3 C1243.4 442.2 1239.8 448.5 1236.4 451.4 C1233.0 454.3 1225.9 457.1 1221.4 458.9 C1216.9 460.7 1209.1 463.2 1204.6 464.5 C1200.1 465.8 1192.7 467.7 1189.6 468.2 C1186.5 468.7 1182.8 470.3 1182.2 468.2 C1181.6 466.1 1184.2 457.5 1185.0 453.3 C1185.8 449.1 1187.9 441.7 1187.8 438.3 C1187.7 434.9 1185.4 431.4 1184.0 429.0 C1182.6 426.6 1178.8 424.9 1177.5 421.5 C1176.2 418.1 1175.6 409.7 1174.7 404.7 C1173.8 399.7 1169.9 389.4 1170.9 386.0 Z" fill="none" stroke="#1a1408" stroke-width="1.3" stroke-linejoin="round" opacity="0.9"/></g><path d="M1193.4 309.7 L1187.8 314.9 L1183.1 320.5 L1183.1 329.9 L1187.8 335.5 L1206.5 335.5 L1209.3 331.7 L1204.6 326.1 L1200.9 316.8 L1198.1 312.1 Z" fill="#d3d04e" stroke="#111" stroke-width="1.2" stroke-linejoin="round"/><g filter="url(#rough1)"><path d="M1067.9 524.4 C1069.2 520.2 1071.8 515.8 1075.0 511.9 C1078.2 508.0 1083.2 503.9 1087.4 501.3 C1091.6 498.7 1095.8 496.9 1099.9 496.0 C1104.1 495.1 1108.5 494.5 1112.3 496.0 C1116.1 497.5 1120.4 501.0 1122.9 504.8 C1125.4 508.6 1127.1 514.5 1127.4 519.0 C1127.7 523.5 1127.2 527.6 1124.7 531.5 C1122.2 535.4 1116.7 539.1 1112.3 542.1 C1107.9 545.1 1103.4 547.6 1098.1 549.2 C1092.8 550.8 1084.7 551.9 1080.3 551.9 C1075.9 551.9 1073.7 551.7 1071.5 549.2 C1069.3 546.7 1067.6 540.9 1067.0 536.8 C1066.4 532.7 1066.6 528.5 1067.9 524.4 Z" fill="url(#g7)"/><g clip-path="url(#c7)"><path d="M1085 520 Q1098 522 1096 534" stroke="#c9beb2" stroke-width="3" fill="none" filter="url(#b1)"/><path d="M1095 498 L1126 510 L1126 525" stroke="#b5aca2" stroke-width="4" fill="none" opacity="0.6" filter="url(#b2)"/><path d="M1067.9 524.4 C1069.2 520.2 1071.8 515.8 1075.0 511.9 C1078.2 508.0 1083.2 503.9 1087.4 501.3 C1091.6 498.7 1095.8 496.9 1099.9 496.0 C1104.1 495.1 1108.5 494.5 1112.3 496.0 C1116.1 497.5 1120.4 501.0 1122.9 504.8 C1125.4 508.6 1127.1 514.5 1127.4 519.0 C1127.7 523.5 1127.2 527.6 1124.7 531.5 C1122.2 535.4 1116.7 539.1 1112.3 542.1 C1107.9 545.1 1103.4 547.6 1098.1 549.2 C1092.8 550.8 1084.7 551.9 1080.3 551.9 C1075.9 551.9 1073.7 551.7 1071.5 549.2 C1069.3 546.7 1067.6 540.9 1067.0 536.8 C1066.4 532.7 1066.6 528.5 1067.9 524.4 Z" fill="none" stroke="#8a8278" stroke-width="3" opacity="0.5" filter="url(#b1)"/></g><path d="M1067.9 524.4 C1069.2 520.2 1071.8 515.8 1075.0 511.9 C1078.2 508.0 1083.2 503.9 1087.4 501.3 C1091.6 498.7 1095.8 496.9 1099.9 496.0 C1104.1 495.1 1108.5 494.5 1112.3 496.0 C1116.1 497.5 1120.4 501.0 1122.9 504.8 C1125.4 508.6 1127.1 514.5 1127.4 519.0 C1127.7 523.5 1127.2 527.6 1124.7 531.5 C1122.2 535.4 1116.7 539.1 1112.3 542.1 C1107.9 545.1 1103.4 547.6 1098.1 549.2 C1092.8 550.8 1084.7 551.9 1080.3 551.9 C1075.9 551.9 1073.7 551.7 1071.5 549.2 C1069.3 546.7 1067.6 540.9 1067.0 536.8 C1066.4 532.7 1066.6 528.5 1067.9 524.4 Z" fill="none" stroke="#1a1408" stroke-width="1.3" stroke-linejoin="round" opacity="0.9"/></g><g filter="url(#rough1)"><path d="M1133.6 535.0 C1137.3 532.3 1145.5 531.2 1151.3 531.5 C1157.1 531.8 1167.8 534.1 1172.6 536.8 C1177.4 539.5 1181.3 545.2 1183.3 549.2 C1185.3 553.2 1186.2 559.4 1185.9 563.4 C1185.6 567.4 1183.8 572.3 1181.5 575.8 C1179.2 579.3 1174.0 583.8 1170.8 586.5 C1167.6 589.2 1162.9 591.5 1160.2 593.6 C1157.5 595.7 1155.2 600.7 1153.1 600.7 C1151.0 600.7 1148.7 595.7 1146.0 593.6 C1143.3 591.5 1138.3 588.9 1135.4 586.5 C1132.5 584.1 1128.2 581.1 1126.5 577.6 C1124.8 574.1 1123.8 567.7 1123.8 563.4 C1123.8 559.1 1125.0 553.5 1126.5 549.2 C1128.0 544.9 1129.9 537.7 1133.6 535.0 Z" fill="url(#g8)"/><g clip-path="url(#c8)"><ellipse cx="1152" cy="562" rx="3.5" ry="7" fill="#0c0800"/><ellipse cx="1144" cy="563" rx="3" ry="3" fill="#1a1204"/><path d="M1153 568 V598" stroke="#3a2808" stroke-width="1.5"/><ellipse cx="1160" cy="560" rx="3" ry="5" fill="#e6dcc0" opacity="0.8" filter="url(#b1)"/><ellipse cx="1140" cy="545" rx="10" ry="5" fill="#b89050" opacity="0.7" filter="url(#b2)"/><ellipse cx="1170" cy="575" rx="8" ry="8" fill="#b08850" opacity="0.6" filter="url(#b2)"/><rect x="1120" y="528" width="70" height="77" filter="url(#wD)" opacity="0.8"/><rect x="1120" y="528" width="70" height="77" filter="url(#wL)" opacity="0.35"/></g><path d="M1133.6 535.0 C1137.3 532.3 1145.5 531.2 1151.3 531.5 C1157.1 531.8 1167.8 534.1 1172.6 536.8 C1177.4 539.5 1181.3 545.2 1183.3 549.2 C1185.3 553.2 1186.2 559.4 1185.9 563.4 C1185.6 567.4 1183.8 572.3 1181.5 575.8 C1179.2 579.3 1174.0 583.8 1170.8 586.5 C1167.6 589.2 1162.9 591.5 1160.2 593.6 C1157.5 595.7 1155.2 600.7 1153.1 600.7 C1151.0 600.7 1148.7 595.7 1146.0 593.6 C1143.3 591.5 1138.3 588.9 1135.4 586.5 C1132.5 584.1 1128.2 581.1 1126.5 577.6 C1124.8 574.1 1123.8 567.7 1123.8 563.4 C1123.8 559.1 1125.0 553.5 1126.5 549.2 C1128.0 544.9 1129.9 537.7 1133.6 535.0 Z" fill="none" stroke="#1a1408" stroke-width="1.6" stroke-linejoin="round" opacity="0.9"/></g><g filter="url(#rough1)"><path d="M1191.3 527.9 C1191.3 523.9 1192.6 521.8 1195.7 519.9 C1198.8 518.0 1204.3 517.0 1209.9 516.4 C1215.5 515.8 1223.2 515.4 1229.4 516.4 C1235.6 517.4 1241.6 519.8 1247.2 522.6 C1252.8 525.4 1259.1 529.4 1263.1 533.2 C1267.1 537.1 1269.8 541.9 1271.1 545.7 C1272.4 549.6 1272.4 552.5 1271.1 556.3 C1269.8 560.1 1266.5 565.5 1263.1 568.7 C1259.7 572.0 1255.1 574.8 1250.7 575.8 C1246.3 576.8 1241.5 576.1 1236.5 574.9 C1231.5 573.7 1225.5 571.5 1220.5 568.7 C1215.5 565.9 1210.4 562.2 1206.3 558.1 C1202.2 554.0 1198.2 548.9 1195.7 543.9 C1193.2 538.9 1191.3 531.9 1191.3 527.9 Z" fill="url(#g9)"/><g clip-path="url(#c9)"><path d="M1205 520 L1232 545" stroke="#b8aca0" stroke-width="3" opacity="0.7" filter="url(#b1)"/><path d="M1228 545 L1248 558" stroke="#fffff6" stroke-width="3" opacity="0.9" filter="url(#b1)"/><path d="M1200 530 L1240 560 M1205 522 L1255 552 M1215 520 L1262 548" stroke="#c4c2a4" stroke-width="1.8" opacity="0.6" filter="url(#b1)"/><path d="M1191.3 527.9 C1191.3 523.9 1192.6 521.8 1195.7 519.9 C1198.8 518.0 1204.3 517.0 1209.9 516.4 C1215.5 515.8 1223.2 515.4 1229.4 516.4 C1235.6 517.4 1241.6 519.8 1247.2 522.6 C1252.8 525.4 1259.1 529.4 1263.1 533.2 C1267.1 537.1 1269.8 541.9 1271.1 545.7 C1272.4 549.6 1272.4 552.5 1271.1 556.3 C1269.8 560.1 1266.5 565.5 1263.1 568.7 C1259.7 572.0 1255.1 574.8 1250.7 575.8 C1246.3 576.8 1241.5 576.1 1236.5 574.9 C1231.5 573.7 1225.5 571.5 1220.5 568.7 C1215.5 565.9 1210.4 562.2 1206.3 558.1 C1202.2 554.0 1198.2 548.9 1195.7 543.9 C1193.2 538.9 1191.3 531.9 1191.3 527.9 Z" fill="none" stroke="#8c8a60" stroke-width="3.5" opacity="0.55" filter="url(#b1)"/></g><path d="M1191.3 527.9 C1191.3 523.9 1192.6 521.8 1195.7 519.9 C1198.8 518.0 1204.3 517.0 1209.9 516.4 C1215.5 515.8 1223.2 515.4 1229.4 516.4 C1235.6 517.4 1241.6 519.8 1247.2 522.6 C1252.8 525.4 1259.1 529.4 1263.1 533.2 C1267.1 537.1 1269.8 541.9 1271.1 545.7 C1272.4 549.6 1272.4 552.5 1271.1 556.3 C1269.8 560.1 1266.5 565.5 1263.1 568.7 C1259.7 572.0 1255.1 574.8 1250.7 575.8 C1246.3 576.8 1241.5 576.1 1236.5 574.9 C1231.5 573.7 1225.5 571.5 1220.5 568.7 C1215.5 565.9 1210.4 562.2 1206.3 558.1 C1202.2 554.0 1198.2 548.9 1195.7 543.9 C1193.2 538.9 1191.3 531.9 1191.3 527.9 Z" fill="none" stroke="#1a1408" stroke-width="1.3" stroke-linejoin="round" opacity="0.9"/></g><g filter="url(#rough1)"><path d="M1040.6 684.8 C1039.6 679.5 1040.9 670.8 1042.4 664.2 C1044.0 657.7 1046.5 651.1 1049.9 645.5 C1053.3 639.9 1059.0 633.7 1063.0 630.6 C1067.0 627.5 1069.5 626.5 1074.2 626.8 C1078.9 627.1 1085.5 630.5 1091.1 632.4 C1096.7 634.3 1102.9 635.3 1107.9 638.1 C1112.9 640.9 1117.2 644.9 1121.0 649.3 C1124.8 653.6 1128.1 659.2 1130.4 664.2 C1132.7 669.2 1134.7 674.5 1135.0 679.2 C1135.3 683.9 1133.9 688.9 1132.2 692.3 C1130.5 695.7 1128.4 697.9 1124.7 699.8 C1121.0 701.7 1115.1 703.5 1109.8 703.5 C1104.5 703.5 1097.0 698.9 1092.9 699.8 C1088.9 700.7 1088.6 707.2 1085.5 709.1 C1082.4 711.0 1078.2 711.6 1074.2 711.0 C1070.2 710.4 1065.6 707.9 1061.2 705.4 C1056.8 702.9 1051.5 699.4 1048.1 696.0 C1044.7 692.6 1041.5 690.1 1040.6 684.8 Z" fill="url(#g10)"/><g clip-path="url(#c10)"><path d="M1075 640 L1108 692 M1088 645 L1120 684 M1066 655 L1098 698 M1058 676 L1086 700 M1100 650 L1126 675" stroke="#9c9c8c" stroke-width="2.2" fill="none" opacity="0.6" filter="url(#b1)"/><ellipse cx="1066" cy="660" rx="12" ry="18" fill="#fff" opacity="0.6" filter="url(#b2)"/><path d="M1040.6 684.8 C1039.6 679.5 1040.9 670.8 1042.4 664.2 C1044.0 657.7 1046.5 651.1 1049.9 645.5 C1053.3 639.9 1059.0 633.7 1063.0 630.6 C1067.0 627.5 1069.5 626.5 1074.2 626.8 C1078.9 627.1 1085.5 630.5 1091.1 632.4 C1096.7 634.3 1102.9 635.3 1107.9 638.1 C1112.9 640.9 1117.2 644.9 1121.0 649.3 C1124.8 653.6 1128.1 659.2 1130.4 664.2 C1132.7 669.2 1134.7 674.5 1135.0 679.2 C1135.3 683.9 1133.9 688.9 1132.2 692.3 C1130.5 695.7 1128.4 697.9 1124.7 699.8 C1121.0 701.7 1115.1 703.5 1109.8 703.5 C1104.5 703.5 1097.0 698.9 1092.9 699.8 C1088.9 700.7 1088.6 707.2 1085.5 709.1 C1082.4 711.0 1078.2 711.6 1074.2 711.0 C1070.2 710.4 1065.6 707.9 1061.2 705.4 C1056.8 702.9 1051.5 699.4 1048.1 696.0 C1044.7 692.6 1041.5 690.1 1040.6 684.8 Z" fill="none" stroke="#86865a" stroke-width="5" opacity="0.6" filter="url(#b1)"/></g><path d="M1040.6 684.8 C1039.6 679.5 1040.9 670.8 1042.4 664.2 C1044.0 657.7 1046.5 651.1 1049.9 645.5 C1053.3 639.9 1059.0 633.7 1063.0 630.6 C1067.0 627.5 1069.5 626.5 1074.2 626.8 C1078.9 627.1 1085.5 630.5 1091.1 632.4 C1096.7 634.3 1102.9 635.3 1107.9 638.1 C1112.9 640.9 1117.2 644.9 1121.0 649.3 C1124.8 653.6 1128.1 659.2 1130.4 664.2 C1132.7 669.2 1134.7 674.5 1135.0 679.2 C1135.3 683.9 1133.9 688.9 1132.2 692.3 C1130.5 695.7 1128.4 697.9 1124.7 699.8 C1121.0 701.7 1115.1 703.5 1109.8 703.5 C1104.5 703.5 1097.0 698.9 1092.9 699.8 C1088.9 700.7 1088.6 707.2 1085.5 709.1 C1082.4 711.0 1078.2 711.6 1074.2 711.0 C1070.2 710.4 1065.6 707.9 1061.2 705.4 C1056.8 702.9 1051.5 699.4 1048.1 696.0 C1044.7 692.6 1041.5 690.1 1040.6 684.8 Z" fill="none" stroke="#1a1408" stroke-width="1.3" stroke-linejoin="round" opacity="0.9"/></g><g filter="url(#rough1)"><path d="M1150.0 679.2 C1149.3 675.5 1150.9 664.7 1152.8 660.5 C1154.7 656.3 1160.5 650.4 1164.0 647.4 C1167.5 644.4 1175.7 639.5 1179.0 638.1 C1182.3 636.7 1185.9 635.6 1188.4 637.1 C1190.9 638.6 1195.5 645.7 1197.7 649.3 C1199.9 652.9 1203.8 660.7 1205.2 664.2 C1206.6 667.7 1209.0 673.5 1208.0 675.5 C1207.0 677.5 1200.6 678.0 1197.7 679.2 C1194.8 680.4 1189.0 682.3 1186.5 684.8 C1184.0 687.3 1181.0 696.3 1179.0 697.9 C1177.0 699.5 1174.2 698.2 1171.5 697.0 C1168.8 695.8 1161.3 691.0 1158.4 688.6 C1155.5 686.2 1150.7 682.9 1150.0 679.2 Z" fill="url(#g11)"/><g clip-path="url(#c11)"><path d="M1168 652 L1196 668 M1162 668 L1186 680 M1175 645 L1200 660" stroke="#9a9e98" stroke-width="2.5" opacity="0.6" filter="url(#b1)"/><path d="M1152 676 L1156 658 L1168 646 L1184 638" stroke="#5e605a" stroke-width="5" fill="none" opacity="0.6" filter="url(#b2)"/><path d="M1150.0 679.2 C1149.3 675.5 1150.9 664.7 1152.8 660.5 C1154.7 656.3 1160.5 650.4 1164.0 647.4 C1167.5 644.4 1175.7 639.5 1179.0 638.1 C1182.3 636.7 1185.9 635.6 1188.4 637.1 C1190.9 638.6 1195.5 645.7 1197.7 649.3 C1199.9 652.9 1203.8 660.7 1205.2 664.2 C1206.6 667.7 1209.0 673.5 1208.0 675.5 C1207.0 677.5 1200.6 678.0 1197.7 679.2 C1194.8 680.4 1189.0 682.3 1186.5 684.8 C1184.0 687.3 1181.0 696.3 1179.0 697.9 C1177.0 699.5 1174.2 698.2 1171.5 697.0 C1168.8 695.8 1161.3 691.0 1158.4 688.6 C1155.5 686.2 1150.7 682.9 1150.0 679.2 Z" fill="none" stroke="#707468" stroke-width="3" opacity="0.5" filter="url(#b1)"/></g><path d="M1150.0 679.2 C1149.3 675.5 1150.9 664.7 1152.8 660.5 C1154.7 656.3 1160.5 650.4 1164.0 647.4 C1167.5 644.4 1175.7 639.5 1179.0 638.1 C1182.3 636.7 1185.9 635.6 1188.4 637.1 C1190.9 638.6 1195.5 645.7 1197.7 649.3 C1199.9 652.9 1203.8 660.7 1205.2 664.2 C1206.6 667.7 1209.0 673.5 1208.0 675.5 C1207.0 677.5 1200.6 678.0 1197.7 679.2 C1194.8 680.4 1189.0 682.3 1186.5 684.8 C1184.0 687.3 1181.0 696.3 1179.0 697.9 C1177.0 699.5 1174.2 698.2 1171.5 697.0 C1168.8 695.8 1161.3 691.0 1158.4 688.6 C1155.5 686.2 1150.7 682.9 1150.0 679.2 Z" fill="none" stroke="#1a1408" stroke-width="1.3" stroke-linejoin="round" opacity="0.9"/></g><g filter="url(#rough1)"><path d="M1107.0 759.6 C1107.3 754.6 1107.8 746.2 1109.8 740.9 C1111.8 735.6 1115.4 731.5 1119.1 727.8 C1122.8 724.1 1126.9 720.2 1132.2 718.5 C1137.5 716.8 1144.7 716.7 1150.9 717.6 C1157.1 718.5 1164.0 721.2 1169.6 724.1 C1175.2 727.0 1179.6 730.9 1184.6 735.3 C1189.6 739.7 1195.2 745.0 1199.6 750.3 C1204.0 755.6 1209.5 762.7 1210.8 767.1 C1212.0 771.5 1210.2 773.1 1207.1 776.5 C1204.0 779.9 1197.7 784.3 1192.1 787.7 C1186.5 791.1 1180.3 794.6 1173.4 797.1 C1166.5 799.6 1158.1 801.9 1150.9 802.7 C1143.7 803.5 1135.7 802.6 1130.4 801.7 C1125.1 800.8 1121.9 800.4 1119.1 797.1 C1116.3 793.8 1115.4 786.5 1113.5 782.1 C1111.6 777.7 1109.0 774.6 1107.9 770.9 C1106.8 767.1 1106.7 764.6 1107.0 759.6 Z" fill="url(#g12)"/><g clip-path="url(#c12)"><path d="M1112 745 V790" stroke="#f4f2e2" stroke-width="6" opacity="0.7" filter="url(#b2)"/><path d="M1114 740 L1200 762 M1113 752 L1202 770 M1113 765 L1196 778 M1116 778 L1180 790 M1120 730 L1190 750" stroke="#f4f2de" stroke-width="2.5" fill="none" opacity="0.55" filter="url(#b1)"/><path d="M1112 738 Q1130 716 1152 718 Q1180 726 1206 762" stroke="#8e8c78" stroke-width="7" fill="none" opacity="0.55" filter="url(#b2)"/><path d="M1107.0 759.6 C1107.3 754.6 1107.8 746.2 1109.8 740.9 C1111.8 735.6 1115.4 731.5 1119.1 727.8 C1122.8 724.1 1126.9 720.2 1132.2 718.5 C1137.5 716.8 1144.7 716.7 1150.9 717.6 C1157.1 718.5 1164.0 721.2 1169.6 724.1 C1175.2 727.0 1179.6 730.9 1184.6 735.3 C1189.6 739.7 1195.2 745.0 1199.6 750.3 C1204.0 755.6 1209.5 762.7 1210.8 767.1 C1212.0 771.5 1210.2 773.1 1207.1 776.5 C1204.0 779.9 1197.7 784.3 1192.1 787.7 C1186.5 791.1 1180.3 794.6 1173.4 797.1 C1166.5 799.6 1158.1 801.9 1150.9 802.7 C1143.7 803.5 1135.7 802.6 1130.4 801.7 C1125.1 800.8 1121.9 800.4 1119.1 797.1 C1116.3 793.8 1115.4 786.5 1113.5 782.1 C1111.6 777.7 1109.0 774.6 1107.9 770.9 C1106.8 767.1 1106.7 764.6 1107.0 759.6 Z" fill="none" stroke="#8a8868" stroke-width="3.5" opacity="0.55" filter="url(#b1)"/></g><path d="M1107.0 759.6 C1107.3 754.6 1107.8 746.2 1109.8 740.9 C1111.8 735.6 1115.4 731.5 1119.1 727.8 C1122.8 724.1 1126.9 720.2 1132.2 718.5 C1137.5 716.8 1144.7 716.7 1150.9 717.6 C1157.1 718.5 1164.0 721.2 1169.6 724.1 C1175.2 727.0 1179.6 730.9 1184.6 735.3 C1189.6 739.7 1195.2 745.0 1199.6 750.3 C1204.0 755.6 1209.5 762.7 1210.8 767.1 C1212.0 771.5 1210.2 773.1 1207.1 776.5 C1204.0 779.9 1197.7 784.3 1192.1 787.7 C1186.5 791.1 1180.3 794.6 1173.4 797.1 C1166.5 799.6 1158.1 801.9 1150.9 802.7 C1143.7 803.5 1135.7 802.6 1130.4 801.7 C1125.1 800.8 1121.9 800.4 1119.1 797.1 C1116.3 793.8 1115.4 786.5 1113.5 782.1 C1111.6 777.7 1109.0 774.6 1107.9 770.9 C1106.8 767.1 1106.7 764.6 1107.0 759.6 Z" fill="none" stroke="#1a1408" stroke-width="1.3" stroke-linejoin="round" opacity="0.9"/></g><g filter="url(#rough)"><path d="M1017.6 892.5 C1019.1 889.2 1028.3 878.2 1031.4 874.9 C1034.5 871.6 1046.7 861.8 1049.0 859.2 C1051.3 856.7 1053.3 849.6 1054.9 849.4 C1056.5 849.2 1062.4 857.2 1064.7 857.2 C1067.0 857.2 1076.1 851.2 1078.4 849.4 C1080.8 847.6 1085.7 841.4 1088.2 839.6 C1090.8 837.8 1100.8 832.4 1103.9 831.8 C1107.0 831.2 1116.8 832.5 1119.5 833.7 C1122.2 834.9 1129.7 841.0 1131.3 843.5 C1132.9 846.0 1135.6 855.9 1135.2 859.2 C1134.8 862.5 1129.6 874.1 1127.4 876.8 C1125.2 879.5 1115.9 885.0 1113.7 886.6 C1111.5 888.2 1107.6 890.9 1105.8 892.5 C1104.0 894.1 1098.2 900.9 1096.0 902.3 C1093.8 903.7 1086.1 905.0 1084.3 906.2 C1082.5 907.4 1080.4 912.7 1078.4 914.1 C1076.4 915.5 1067.4 918.7 1064.7 919.9 C1062.0 921.1 1053.8 924.4 1051.0 925.8 C1048.2 927.2 1040.0 932.7 1037.2 933.7 C1034.5 934.7 1025.4 936.8 1023.5 935.6 C1021.6 934.4 1019.3 924.6 1018.6 921.9 C1017.9 919.2 1016.8 911.1 1016.7 908.2 C1016.6 905.3 1016.1 895.8 1017.6 892.5 Z" fill="url(#g13)"/><g clip-path="url(#c13)"><ellipse cx="1072" cy="870" rx="20" ry="10" fill="#8e4e34" opacity="0.7" filter="url(#b2)" transform="rotate(-30 1072 870)"/><path d="M1025 925 L1060 890 L1100 850 M1060 890 L1085 895 M1070 880 L1110 875 M1040 910 L1030 885" stroke="#cdb260" stroke-width="1.6" fill="none" opacity="0.75"/><ellipse cx="1026" cy="928" rx="5" ry="4" fill="#f0d890" opacity="0.8" filter="url(#b1)"/><ellipse cx="1088" cy="852" rx="5" ry="3" fill="#e8c8a8" opacity="0.7" filter="url(#b1)"/><path d="M1050 862 L1068 868 M1100 842 L1112 862 M1030 900 L1050 915" stroke="#3a2408" stroke-width="2.5" fill="none" opacity="0.55" filter="url(#b1)"/><rect x="1013" y="828" width="126" height="112" filter="url(#wD)" opacity="0.85"/><rect x="1013" y="828" width="126" height="112" filter="url(#wL)" opacity="0.5"/></g><path d="M1017.6 892.5 C1019.1 889.2 1028.3 878.2 1031.4 874.9 C1034.5 871.6 1046.7 861.8 1049.0 859.2 C1051.3 856.7 1053.3 849.6 1054.9 849.4 C1056.5 849.2 1062.4 857.2 1064.7 857.2 C1067.0 857.2 1076.1 851.2 1078.4 849.4 C1080.8 847.6 1085.7 841.4 1088.2 839.6 C1090.8 837.8 1100.8 832.4 1103.9 831.8 C1107.0 831.2 1116.8 832.5 1119.5 833.7 C1122.2 834.9 1129.7 841.0 1131.3 843.5 C1132.9 846.0 1135.6 855.9 1135.2 859.2 C1134.8 862.5 1129.6 874.1 1127.4 876.8 C1125.2 879.5 1115.9 885.0 1113.7 886.6 C1111.5 888.2 1107.6 890.9 1105.8 892.5 C1104.0 894.1 1098.2 900.9 1096.0 902.3 C1093.8 903.7 1086.1 905.0 1084.3 906.2 C1082.5 907.4 1080.4 912.7 1078.4 914.1 C1076.4 915.5 1067.4 918.7 1064.7 919.9 C1062.0 921.1 1053.8 924.4 1051.0 925.8 C1048.2 927.2 1040.0 932.7 1037.2 933.7 C1034.5 934.7 1025.4 936.8 1023.5 935.6 C1021.6 934.4 1019.3 924.6 1018.6 921.9 C1017.9 919.2 1016.8 911.1 1016.7 908.2 C1016.6 905.3 1016.1 895.8 1017.6 892.5 Z" fill="none" stroke="#1a1408" stroke-width="1.8" stroke-linejoin="round" opacity="0.9"/></g><g filter="url(#rough)"><path d="M1151.9 867.0 C1152.3 863.5 1156.2 853.9 1158.7 851.4 C1161.2 848.9 1172.5 843.0 1176.4 841.6 C1180.3 840.2 1194.8 837.4 1197.9 837.6 C1201.0 837.8 1205.5 843.5 1207.7 843.5 C1209.9 843.5 1216.8 838.4 1219.5 837.6 C1222.2 836.8 1231.7 836.2 1235.2 835.7 C1238.7 835.2 1251.1 832.6 1254.8 832.7 C1258.5 832.8 1270.2 835.0 1272.4 836.7 C1274.6 838.4 1276.5 847.1 1276.3 849.4 C1276.1 851.6 1272.4 857.6 1270.4 859.2 C1268.4 860.8 1257.7 863.9 1256.7 865.1 C1255.7 866.3 1259.1 869.6 1260.6 871.0 C1262.1 872.4 1270.6 876.6 1271.4 878.8 C1272.2 880.9 1269.8 889.8 1268.5 892.5 C1267.2 895.2 1261.2 904.3 1258.7 906.2 C1256.2 908.1 1245.9 911.3 1243.0 911.1 C1240.1 910.9 1232.2 905.8 1229.3 904.3 C1226.4 902.8 1216.5 898.2 1213.6 896.4 C1210.7 894.6 1202.6 887.0 1199.9 886.6 C1197.2 886.2 1189.5 891.7 1186.2 892.5 C1182.9 893.3 1169.7 895.1 1166.6 894.5 C1163.5 893.9 1156.3 889.4 1154.8 886.6 C1153.3 883.9 1151.5 870.5 1151.9 867.0 Z" fill="url(#g14)"/><g clip-path="url(#c14)"><ellipse cx="1176" cy="872" rx="5" ry="3" fill="#f6e8a0" opacity="0.85" filter="url(#b1)"/><ellipse cx="1216" cy="872" rx="5" ry="4" fill="#f0d870" opacity="0.85" filter="url(#b1)"/><ellipse cx="1245" cy="852" rx="14" ry="9" fill="#a8803c" opacity="0.8" filter="url(#b2)"/><ellipse cx="1245" cy="892" rx="12" ry="10" fill="#a4763c" opacity="0.8" filter="url(#b2)"/><path d="M1200 845 L1225 880 L1260 900" stroke="#4a340c" stroke-width="4" fill="none" opacity="0.6" filter="url(#b2)"/><path d="M1196 840 L1212 858 L1250 868 M1212 858 L1200 884 M1160 862 L1190 856" stroke="#3a2806" stroke-width="3" fill="none" opacity="0.65" filter="url(#b1)"/><ellipse cx="1205" cy="848" rx="16" ry="7" fill="#4a3610" opacity="0.55" filter="url(#b2)"/><rect x="1148" y="829" width="132" height="86" filter="url(#wD)" opacity="0.85"/><rect x="1148" y="829" width="132" height="86" filter="url(#wL)" opacity="0.5"/></g><path d="M1151.9 867.0 C1152.3 863.5 1156.2 853.9 1158.7 851.4 C1161.2 848.9 1172.5 843.0 1176.4 841.6 C1180.3 840.2 1194.8 837.4 1197.9 837.6 C1201.0 837.8 1205.5 843.5 1207.7 843.5 C1209.9 843.5 1216.8 838.4 1219.5 837.6 C1222.2 836.8 1231.7 836.2 1235.2 835.7 C1238.7 835.2 1251.1 832.6 1254.8 832.7 C1258.5 832.8 1270.2 835.0 1272.4 836.7 C1274.6 838.4 1276.5 847.1 1276.3 849.4 C1276.1 851.6 1272.4 857.6 1270.4 859.2 C1268.4 860.8 1257.7 863.9 1256.7 865.1 C1255.7 866.3 1259.1 869.6 1260.6 871.0 C1262.1 872.4 1270.6 876.6 1271.4 878.8 C1272.2 880.9 1269.8 889.8 1268.5 892.5 C1267.2 895.2 1261.2 904.3 1258.7 906.2 C1256.2 908.1 1245.9 911.3 1243.0 911.1 C1240.1 910.9 1232.2 905.8 1229.3 904.3 C1226.4 902.8 1216.5 898.2 1213.6 896.4 C1210.7 894.6 1202.6 887.0 1199.9 886.6 C1197.2 886.2 1189.5 891.7 1186.2 892.5 C1182.9 893.3 1169.7 895.1 1166.6 894.5 C1163.5 893.9 1156.3 889.4 1154.8 886.6 C1153.3 883.9 1151.5 870.5 1151.9 867.0 Z" fill="none" stroke="#1a1408" stroke-width="1.8" stroke-linejoin="round" opacity="0.9"/></g><g filter="url(#rough)"><path d="M1070.5 951.3 C1070.3 949.1 1072.9 944.1 1074.5 943.5 C1076.1 942.9 1083.9 945.6 1086.2 945.4 C1088.5 945.2 1096.4 943.5 1098.0 941.5 C1099.6 939.5 1099.9 927.8 1101.9 925.8 C1103.9 923.8 1114.7 922.1 1117.6 921.9 C1120.5 921.7 1129.5 922.3 1131.3 923.9 C1133.1 925.5 1133.4 936.4 1135.2 937.6 C1137.0 938.8 1145.8 936.5 1148.9 935.6 C1152.0 934.7 1163.7 928.8 1166.6 928.8 C1169.5 928.8 1176.4 933.6 1178.3 935.6 C1180.2 937.6 1184.4 946.4 1185.2 949.3 C1186.0 952.2 1187.7 962.8 1186.2 965.0 C1184.7 967.2 1171.5 969.5 1170.5 970.9 C1169.5 972.3 1176.8 976.9 1176.4 978.7 C1176.0 980.5 1165.8 987.3 1166.6 988.5 C1167.4 989.7 1181.8 989.1 1184.2 990.5 C1186.7 991.9 1190.7 999.7 1191.1 1002.2 C1191.5 1004.8 1190.0 1013.8 1188.1 1016.0 C1186.2 1018.2 1175.5 1022.4 1172.4 1023.8 C1169.3 1025.2 1160.3 1028.5 1156.8 1029.7 C1153.3 1030.9 1141.1 1035.0 1137.2 1035.6 C1133.3 1036.2 1121.1 1036.4 1117.6 1035.6 C1114.1 1034.8 1105.2 1029.5 1101.9 1027.7 C1098.6 1025.9 1087.0 1020.0 1084.3 1017.9 C1081.6 1015.8 1076.0 1008.6 1074.5 1006.2 C1073.0 1003.9 1069.4 996.4 1069.6 994.4 C1069.8 992.4 1074.0 987.6 1076.4 986.6 C1078.9 985.6 1090.8 985.2 1094.1 984.6 C1097.4 984.0 1108.5 981.9 1109.7 980.7 C1110.9 979.5 1108.0 973.7 1105.8 972.9 C1103.6 972.1 1091.1 973.7 1088.2 972.9 C1085.3 972.1 1078.2 967.2 1076.4 965.0 C1074.6 962.8 1070.7 953.4 1070.5 951.3 Z" fill="url(#g15)"/><g clip-path="url(#c15)"><ellipse cx="1157" cy="952" rx="6" ry="8" fill="#f0d8b8" opacity="0.8" filter="url(#b1)"/><ellipse cx="1124" cy="978" rx="5" ry="3" fill="#f4e4b0" opacity="0.85" filter="url(#b1)"/><ellipse cx="1155" cy="1003" rx="7" ry="6" fill="#f2e6c0" opacity="0.8" filter="url(#b1)"/><ellipse cx="1112" cy="1015" rx="6" ry="4" fill="#ecd6b0" opacity="0.7" filter="url(#b1)"/><path d="M1125 930 L1135 975 L1130 1030 M1100 975 L1175 982" stroke="#4a340c" stroke-width="5" fill="none" opacity="0.6" filter="url(#b2)"/><path d="M1102 930 L1136 942 M1136 942 L1140 972 M1120 982 L1170 986 M1086 950 L1100 965 M1140 1000 L1135 1030 M1150 960 L1180 962" stroke="#342204" stroke-width="2.6" fill="none" opacity="0.7" filter="url(#b1)"/><rect x="1066" y="918" width="130" height="122" filter="url(#wD)" opacity="0.85"/><rect x="1066" y="918" width="130" height="122" filter="url(#wL)" opacity="0.5"/></g><path d="M1070.5 951.3 C1070.3 949.1 1072.9 944.1 1074.5 943.5 C1076.1 942.9 1083.9 945.6 1086.2 945.4 C1088.5 945.2 1096.4 943.5 1098.0 941.5 C1099.6 939.5 1099.9 927.8 1101.9 925.8 C1103.9 923.8 1114.7 922.1 1117.6 921.9 C1120.5 921.7 1129.5 922.3 1131.3 923.9 C1133.1 925.5 1133.4 936.4 1135.2 937.6 C1137.0 938.8 1145.8 936.5 1148.9 935.6 C1152.0 934.7 1163.7 928.8 1166.6 928.8 C1169.5 928.8 1176.4 933.6 1178.3 935.6 C1180.2 937.6 1184.4 946.4 1185.2 949.3 C1186.0 952.2 1187.7 962.8 1186.2 965.0 C1184.7 967.2 1171.5 969.5 1170.5 970.9 C1169.5 972.3 1176.8 976.9 1176.4 978.7 C1176.0 980.5 1165.8 987.3 1166.6 988.5 C1167.4 989.7 1181.8 989.1 1184.2 990.5 C1186.7 991.9 1190.7 999.7 1191.1 1002.2 C1191.5 1004.8 1190.0 1013.8 1188.1 1016.0 C1186.2 1018.2 1175.5 1022.4 1172.4 1023.8 C1169.3 1025.2 1160.3 1028.5 1156.8 1029.7 C1153.3 1030.9 1141.1 1035.0 1137.2 1035.6 C1133.3 1036.2 1121.1 1036.4 1117.6 1035.6 C1114.1 1034.8 1105.2 1029.5 1101.9 1027.7 C1098.6 1025.9 1087.0 1020.0 1084.3 1017.9 C1081.6 1015.8 1076.0 1008.6 1074.5 1006.2 C1073.0 1003.9 1069.4 996.4 1069.6 994.4 C1069.8 992.4 1074.0 987.6 1076.4 986.6 C1078.9 985.6 1090.8 985.2 1094.1 984.6 C1097.4 984.0 1108.5 981.9 1109.7 980.7 C1110.9 979.5 1108.0 973.7 1105.8 972.9 C1103.6 972.1 1091.1 973.7 1088.2 972.9 C1085.3 972.1 1078.2 967.2 1076.4 965.0 C1074.6 962.8 1070.7 953.4 1070.5 951.3 Z" fill="none" stroke="#1a1408" stroke-width="1.8" stroke-linejoin="round" opacity="0.9"/></g></g></svg>
<svg class="a" style="left:1273px;top:412px;" width="26" height="26"><path d="M13 1 V25 M1 13 H25" stroke="#3c3c3c" stroke-width="1.8"/></svg>
<div class="a" style="left:1286px;top:445px;width:73px;height:66px;background:#ffffe4;border:1px solid #000;box-sizing:border-box;"></div>
<div class="a t" style="left:1296.80px;top:447.00px;font-size:12px;line-height:16px;color:#000;letter-spacing:-0.111px;font-weight:bold;">Xtraining</div>
<div class="a t" style="left:1290.00px;top:462.50px;font-size:12px;line-height:16px;color:#000;letter-spacing:-0.920px;">X:</div>
<div class="a t" style="left:1322.30px;top:462.50px;font-size:12px;line-height:16px;color:#000;letter-spacing:-0.840px;">251</div>
<div class="a t" style="left:1290.00px;top:478.30px;font-size:12px;line-height:16px;color:#000;letter-spacing:-0.588px;">Y:</div>
<div class="a t" style="left:1322.30px;top:478.30px;font-size:12px;line-height:16px;color:#000;letter-spacing:-0.840px;">198</div>
<div class="a t" style="left:1290.00px;top:494.60px;font-size:12px;line-height:16px;color:#000;letter-spacing:-0.436px;">Value:1.3205</div>
<div class="a" style="left:1700px;top:14px;width:92px;height:50px;border:3px solid #1283f6;box-sizing:border-box;border-radius:2px;"></div>
<svg class="a" style="left:720px;top:40px;" width="960" height="50"><path d="M947.5 14.6 L24 35.1" stroke="#1283f6" stroke-width="3.1" fill="none" stroke-linecap="round"/><path d="M11.3 35.5 L25.9 31 L26 40 Z" fill="#1283f6"/></svg>
</body></html>
